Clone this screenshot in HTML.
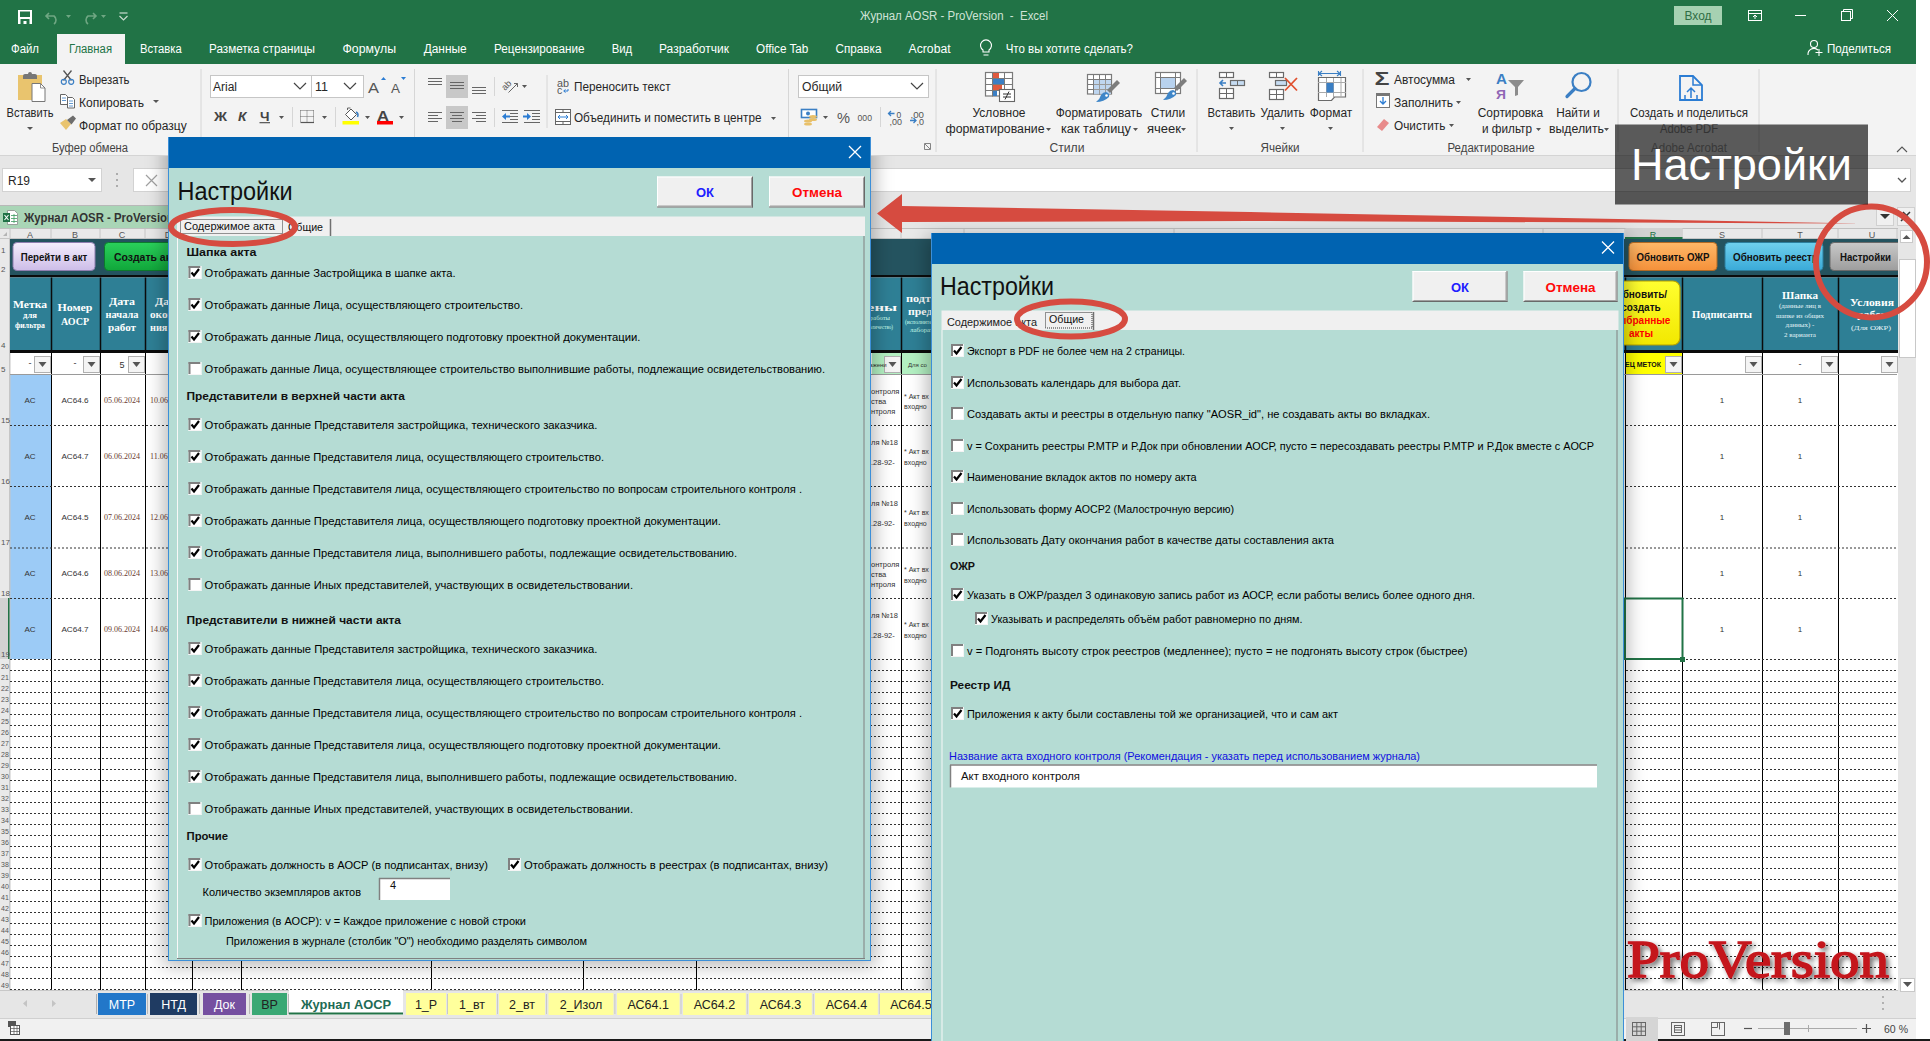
<!DOCTYPE html>
<html><head><meta charset="utf-8"><title>Excel</title>
<style>html,body{margin:0;padding:0;background:#fff;overflow:hidden}svg{display:block}text{white-space:pre}</style>
</head><body>
<svg width="1930" height="1041" viewBox="0 0 1930 1041" font-family="Liberation Sans, sans-serif">
<rect x="0" y="0" width="1930" height="1041" fill="#ffffff" />
<rect x="0" y="0" width="1916" height="64" fill="#217346" />
<rect x="18" y="10" width="14" height="14" fill="#ffffff"/><rect x="20" y="11.5" width="10" height="5.5" fill="#217346"/><rect x="20.5" y="19" width="9" height="5" fill="#217346"/><rect x="23.5" y="21" width="3" height="3" fill="#ffffff"/>
<g fill="none" stroke="#6fa783" stroke-width="1.6"><path d="M49 13 l-3 3 3 3 M46 16 h8 a5 5 0 0 1 0 8"/><path d="M93 13 l3 3 -3 3 M96 16 h-8 a5 5 0 0 0 0 8"/></g>
<g fill="#6fa783"><path d="M66 15 h5 l-2.5 3z"/><path d="M101 15 h5 l-2.5 3z"/></g>
<g fill="none" stroke="#c9dccf" stroke-width="1.2"><path d="M119.5 13 h8"/><path d="M119.5 16 l4 4 4-4"/></g>
<text x="954" y="20" font-size="12" fill="#cfe3d6" font-family="Liberation Sans" text-anchor="middle" textLength="188" lengthAdjust="spacingAndGlyphs" >Журнал AOSR - ProVersion  -  Excel</text>
<rect x="1674" y="6" width="48" height="19" fill="#a6d1b2" />
<text x="1698" y="20" font-size="12" fill="#2f6e45" font-family="Liberation Sans" text-anchor="middle" >Вход</text>
<g fill="none" stroke="#ffffff" stroke-width="1">
<rect x="1748.5" y="10.5" width="13" height="10"/><path d="M1748.5 13.5 h13 M1755 19 v-4 M1753 17 l2-2 2 2"/>
<path d="M1795 15.5 h11"/>
<rect x="1841.5" y="11.5" width="9" height="9"/><path d="M1843.5 11.5 v-2 h9 v9 h-2"/>
<path d="M1887 10 l11 11 M1898 10 l-11 11"/>
</g>
<rect x="57" y="34" width="68" height="30" fill="#f3f3f3" />
<text x="11" y="53" font-size="12.5" fill="#ffffff" font-family="Liberation Sans" textLength="28" lengthAdjust="spacingAndGlyphs" >Файл</text>
<text x="69" y="53" font-size="12.5" fill="#217346" font-family="Liberation Sans" textLength="43" lengthAdjust="spacingAndGlyphs" >Главная</text>
<text x="140" y="53" font-size="12.5" fill="#ffffff" font-family="Liberation Sans" textLength="41.7" lengthAdjust="spacingAndGlyphs" >Вставка</text>
<text x="209" y="53" font-size="12.5" fill="#ffffff" font-family="Liberation Sans" textLength="106" lengthAdjust="spacingAndGlyphs" >Разметка страницы</text>
<text x="342.5" y="53" font-size="12.5" fill="#ffffff" font-family="Liberation Sans" textLength="53.5" lengthAdjust="spacingAndGlyphs" >Формулы</text>
<text x="423.7" y="53" font-size="12.5" fill="#ffffff" font-family="Liberation Sans" textLength="43" lengthAdjust="spacingAndGlyphs" >Данные</text>
<text x="494" y="53" font-size="12.5" fill="#ffffff" font-family="Liberation Sans" textLength="90.5" lengthAdjust="spacingAndGlyphs" >Рецензирование</text>
<text x="611.7" y="53" font-size="12.5" fill="#ffffff" font-family="Liberation Sans" textLength="20.5" lengthAdjust="spacingAndGlyphs" >Вид</text>
<text x="659" y="53" font-size="12.5" fill="#ffffff" font-family="Liberation Sans" textLength="70" lengthAdjust="spacingAndGlyphs" >Разработчик</text>
<text x="756" y="53" font-size="12.5" fill="#ffffff" font-family="Liberation Sans" textLength="52.4" lengthAdjust="spacingAndGlyphs" >Office Tab</text>
<text x="835.6" y="53" font-size="12.5" fill="#ffffff" font-family="Liberation Sans" textLength="45.8" lengthAdjust="spacingAndGlyphs" >Справка</text>
<text x="908.6" y="53" font-size="12.5" fill="#ffffff" font-family="Liberation Sans" textLength="42" lengthAdjust="spacingAndGlyphs" >Acrobat</text>
<text x="1005.7" y="53" font-size="12.5" fill="#ffffff" font-family="Liberation Sans" textLength="127.3" lengthAdjust="spacingAndGlyphs" >Что вы хотите сделать?</text>
<g fill="none" stroke="#ffffff" stroke-width="1.1"><path d="M983 52 v-2 a5.5 5.5 0 1 1 6 0 v2 z M983.5 55 h5"/></g>
<g fill="none" stroke="#ffffff" stroke-width="1.1"><circle cx="1814" cy="44" r="3.5"/><path d="M1808 55 a6 6 0 0 1 10-5 M1819 49 v7 M1815.5 52.5 h7"/></g>
<text x="1827" y="53" font-size="12.5" fill="#ffffff" font-family="Liberation Sans" textLength="64" lengthAdjust="spacingAndGlyphs" >Поделиться</text>
<rect x="0" y="64" width="1916" height="92" fill="#f3f3f3" />
<rect x="0" y="155" width="1916" height="1" fill="#d4d4d4" />
<line x1="201" y1="69" x2="201" y2="152" stroke="#d6d6d6" stroke-width="1" />
<line x1="414.5" y1="69" x2="414.5" y2="152" stroke="#d6d6d6" stroke-width="1" />
<line x1="788.5" y1="69" x2="788.5" y2="152" stroke="#d6d6d6" stroke-width="1" />
<line x1="936" y1="69" x2="936" y2="152" stroke="#d6d6d6" stroke-width="1" />
<line x1="1197" y1="69" x2="1197" y2="152" stroke="#d6d6d6" stroke-width="1" />
<line x1="1363" y1="69" x2="1363" y2="152" stroke="#d6d6d6" stroke-width="1" />
<line x1="1618" y1="69" x2="1618" y2="152" stroke="#d6d6d6" stroke-width="1" />
<line x1="1759" y1="69" x2="1759" y2="152" stroke="#d6d6d6" stroke-width="1" />
<text x="90" y="152" font-size="12" fill="#444444" font-family="Liberation Sans" text-anchor="middle" textLength="76" lengthAdjust="spacingAndGlyphs" >Буфер обмена</text>
<text x="1067" y="152" font-size="12" fill="#444444" font-family="Liberation Sans" text-anchor="middle" textLength="35" lengthAdjust="spacingAndGlyphs" >Стили</text>
<text x="1280" y="152" font-size="12" fill="#444444" font-family="Liberation Sans" text-anchor="middle" textLength="39" lengthAdjust="spacingAndGlyphs" >Ячейки</text>
<text x="1491" y="152" font-size="12" fill="#444444" font-family="Liberation Sans" text-anchor="middle" textLength="87" lengthAdjust="spacingAndGlyphs" >Редактирование</text>
<text x="1689" y="152" font-size="12" fill="#9a9a9a" font-family="Liberation Sans" text-anchor="middle" textLength="76" lengthAdjust="spacingAndGlyphs" >Adobe Acrobat</text>
<rect x="18" y="75" width="24" height="25" fill="#e9c46e"/><path d="M23 79 v-3 a2 2 0 0 1 2-2 h3 a2 2 0 0 1 4 0 h3 a2 2 0 0 1 2 2 v3z" fill="#777"/><path d="M32 83.5 h8.5 l4.5 4.5 v13.5 h-13z" fill="#fff" stroke="#777" stroke-width="1"/><path d="M40.5 83.5 v4.5 h4.5" fill="none" stroke="#777" stroke-width="0.8"/>
<text x="30" y="117" font-size="12.5" fill="#262626" font-family="Liberation Sans" text-anchor="middle" textLength="47" lengthAdjust="spacingAndGlyphs" >Вставить</text>
<path d="M27 127 h6 l-3 3z" fill="#555"/>
<path d="M63.5 70.5 l8 10 M71.5 70.5 l-8 10" stroke="#555" stroke-width="1.3"/><g fill="none" stroke="#3b7fc4" stroke-width="1.2"><circle cx="63.8" cy="81.8" r="2.5"/><circle cx="71.2" cy="81.8" r="2.5"/></g>
<text x="79" y="84" font-size="12.5" fill="#262626" font-family="Liberation Sans" textLength="50.5" lengthAdjust="spacingAndGlyphs" >Вырезать</text>
<path d="M60.5 94.5 h5 l2 2 v8 h-7z" fill="#fff" stroke="#666" stroke-width="1"/><path d="M62 98 h4 M62 100.5 h4" stroke="#3b7fc4" stroke-width="0.8"/><path d="M67.5 97.5 h5 l2 2 v8.5 h-7z" fill="#fff" stroke="#666" stroke-width="1"/><path d="M69 101 h4 M69 103.5 h4 M69 106 h4" stroke="#3b7fc4" stroke-width="0.8"/>
<text x="79" y="107" font-size="12.5" fill="#262626" font-family="Liberation Sans" textLength="65" lengthAdjust="spacingAndGlyphs" >Копировать</text>
<path d="M153 100 h6 l-3 3z" fill="#555"/>
<path d="M60 123 l6-4 5 5 -5 6z" fill="#e9c46e"/><path d="M67 120 l6-4.5 3 3 -4.5 6z" fill="#6d6d6d"/>
<text x="79" y="130" font-size="12.5" fill="#262626" font-family="Liberation Sans" textLength="107.7" lengthAdjust="spacingAndGlyphs" >Формат по образцу</text>
<rect x="210.5" y="75.5" width="101" height="22" fill="#ffffff" stroke="#c6c6c6" stroke-width="1" />
<rect x="311.5" y="75.5" width="52" height="22" fill="#ffffff" stroke="#c6c6c6" stroke-width="1" />
<text x="213" y="91" font-size="12.5" fill="#262626" font-family="Liberation Sans" textLength="24" lengthAdjust="spacingAndGlyphs" >Arial</text>
<text x="315" y="91" font-size="12.5" fill="#262626" font-family="Liberation Sans" textLength="13" lengthAdjust="spacingAndGlyphs" >11</text>
<path d="M294 83 l6 6 6-6 M344 83 l6 6 6-6" fill="none" stroke="#444" stroke-width="1.2"/>
<text x="368" y="93" font-size="15" fill="#555" font-family="Liberation Sans" textLength="11" lengthAdjust="spacingAndGlyphs" >A</text>
<path d="M381 80 l2.5-3 2.5 3z" fill="#2b7cd3"/>
<text x="391" y="93" font-size="12" fill="#555" font-family="Liberation Sans" textLength="9" lengthAdjust="spacingAndGlyphs" >A</text>
<path d="M401 77 l2.5 3 2.5-3z" fill="#2b7cd3"/>
<text x="214" y="121" font-size="13" fill="#444" font-family="Liberation Sans" font-weight="bold" textLength="13" lengthAdjust="spacingAndGlyphs" >Ж</text>
<text x="238" y="121" font-size="13" fill="#444" font-family="Liberation Sans" font-weight="bold" textLength="8.5" lengthAdjust="spacingAndGlyphs" font-style="italic">К</text>
<text x="260" y="121" font-size="13" fill="#444" font-family="Liberation Sans" font-weight="bold" textLength="9.5" lengthAdjust="spacingAndGlyphs" >Ч</text>
<line x1="259.5" y1="122.7" x2="270" y2="122.7" stroke="#444" stroke-width="1.1" />
<path d="M279 116 h5 l-2.5 3z M322 116 h5 l-2.5 3z M365 116 h5 l-2.5 3z M399 116 h5 l-2.5 3z" fill="#555"/>
<line x1="292.5" y1="107" x2="292.5" y2="127" stroke="#d6d6d6" stroke-width="1" />
<line x1="335.5" y1="107" x2="335.5" y2="127" stroke="#d6d6d6" stroke-width="1" />
<g stroke="#666" stroke-width="1" stroke-dasharray="1,1" fill="none"><path d="M300.5 110.5 h13 M300.5 116.5 h13 M300.5 110.5 v11 M307 110.5 v11 M313.5 110.5 v11"/></g>
<line x1="300.5" y1="122.5" x2="314" y2="122.5" stroke="#555" stroke-width="1.2" />
<path d="M345.5 114.5 l5.5-5.5 5.5 5.5 -5.5 5.5z" fill="#fff" stroke="#555" stroke-width="1"/><path d="M356 112 q3 1.5 1.5 5" fill="none" stroke="#3b7fc4" stroke-width="1.6"/><path d="M347.5 110 v-2 h3" fill="none" stroke="#555" stroke-width="0.9"/>
<rect x="342.5" y="121" width="16.5" height="3.5" fill="#ffff00" />
<text x="377" y="121" font-size="14" fill="#444" font-family="Liberation Sans" font-weight="bold" textLength="12" lengthAdjust="spacingAndGlyphs" >A</text>
<rect x="377" y="121" width="16" height="3.5" fill="#ff0000" />
<rect x="446" y="75" width="22" height="23" fill="#c8c8c8" />
<rect x="446" y="106" width="22" height="23" fill="#c8c8c8" />
<line x1="428" y1="78.5" x2="442" y2="78.5" stroke="#666" stroke-width="1" />
<line x1="428" y1="81.5" x2="442" y2="81.5" stroke="#666" stroke-width="1" />
<line x1="428" y1="84.5" x2="442" y2="84.5" stroke="#666" stroke-width="1" />
<line x1="450" y1="82.5" x2="464" y2="82.5" stroke="#666" stroke-width="1" />
<line x1="450" y1="85.5" x2="464" y2="85.5" stroke="#666" stroke-width="1" />
<line x1="450" y1="88.5" x2="464" y2="88.5" stroke="#666" stroke-width="1" />
<line x1="472" y1="87.5" x2="486" y2="87.5" stroke="#666" stroke-width="1" />
<line x1="472" y1="90.5" x2="486" y2="90.5" stroke="#666" stroke-width="1" />
<line x1="472" y1="93.5" x2="486" y2="93.5" stroke="#666" stroke-width="1" />
<line x1="428" y1="112.5" x2="442" y2="112.5" stroke="#666" stroke-width="1" />
<line x1="450" y1="112.5" x2="464" y2="112.5" stroke="#666" stroke-width="1" />
<line x1="472" y1="112.5" x2="486" y2="112.5" stroke="#666" stroke-width="1" />
<line x1="428" y1="115.5" x2="438" y2="115.5" stroke="#666" stroke-width="1" />
<line x1="452" y1="115.5" x2="462" y2="115.5" stroke="#666" stroke-width="1" />
<line x1="476" y1="115.5" x2="486" y2="115.5" stroke="#666" stroke-width="1" />
<line x1="428" y1="118.5" x2="442" y2="118.5" stroke="#666" stroke-width="1" />
<line x1="450" y1="118.5" x2="464" y2="118.5" stroke="#666" stroke-width="1" />
<line x1="472" y1="118.5" x2="486" y2="118.5" stroke="#666" stroke-width="1" />
<line x1="428" y1="121.5" x2="438" y2="121.5" stroke="#666" stroke-width="1" />
<line x1="452" y1="121.5" x2="462" y2="121.5" stroke="#666" stroke-width="1" />
<line x1="476" y1="121.5" x2="486" y2="121.5" stroke="#666" stroke-width="1" />
<line x1="494.5" y1="77" x2="494.5" y2="96" stroke="#d6d6d6" stroke-width="1" />
<line x1="494.5" y1="108" x2="494.5" y2="127" stroke="#d6d6d6" stroke-width="1" />
<line x1="547" y1="75" x2="547" y2="128" stroke="#d6d6d6" stroke-width="1" />
<text x="0" y="0" font-size="9" fill="#555" font-family="Liberation Sans" transform="translate(505 91) rotate(-45)">ab</text>
<path d="M508.5 92.5 l9-9 M514 83.5 h3.5 v3.5" fill="none" stroke="#666" stroke-width="1"/><path d="M522 85 h5 l-2.5 3z" fill="#555"/>
<line x1="502" y1="110.5" x2="518" y2="110.5" stroke="#666" stroke-width="1" />
<line x1="524" y1="110.5" x2="540" y2="110.5" stroke="#666" stroke-width="1" />
<line x1="502" y1="122.5" x2="518" y2="122.5" stroke="#666" stroke-width="1" />
<line x1="524" y1="122.5" x2="540" y2="122.5" stroke="#666" stroke-width="1" />
<line x1="510" y1="113.5" x2="518" y2="113.5" stroke="#666" stroke-width="1" />
<line x1="532" y1="113.5" x2="540" y2="113.5" stroke="#666" stroke-width="1" />
<line x1="510" y1="116.5" x2="518" y2="116.5" stroke="#666" stroke-width="1" />
<line x1="532" y1="116.5" x2="540" y2="116.5" stroke="#666" stroke-width="1" />
<line x1="510" y1="119.5" x2="518" y2="119.5" stroke="#666" stroke-width="1" />
<line x1="532" y1="119.5" x2="540" y2="119.5" stroke="#666" stroke-width="1" />
<path d="M502 116.5 l4-3.5 v2.5 h4 v2 h-4 v2.5z M531 116.5 l-4-3.5 v2.5 h-4 v2 h4 v2.5z" fill="#2b7cd3"/>
<text x="557" y="87" font-size="10.5" fill="#555" font-family="Liberation Sans" textLength="12" lengthAdjust="spacingAndGlyphs" >ab</text>
<text x="557" y="94" font-size="10.5" fill="#555" font-family="Liberation Sans" >c</text>
<path d="M568 89 v2 h-4 M565.5 89.5 l-1.8 1.5 1.8 1.5" fill="none" stroke="#2b7cd3" stroke-width="1"/>
<rect x="555.5" y="109.5" width="15" height="15" fill="#fff" stroke="#666"/><path d="M556 112.5 h14 M556 121.5 h14 M563 109.5 v3 M563 121.5 v3" stroke="#666"/><path d="M558 117 h10 M558 117 l2-2 M558 117 l2 2 M568 117 l-2-2 M568 117 l-2 2" stroke="#2b7cd3" fill="none"/>
<text x="574" y="91" font-size="12.5" fill="#262626" font-family="Liberation Sans" textLength="96.6" lengthAdjust="spacingAndGlyphs" >Переносить текст</text>
<text x="574" y="122" font-size="12.5" fill="#262626" font-family="Liberation Sans" textLength="187.5" lengthAdjust="spacingAndGlyphs" >Объединить и поместить в центре</text>
<path d="M771 117 h5 l-2.5 3z" fill="#555"/>
<rect x="798.5" y="75.5" width="130" height="22" fill="#ffffff" stroke="#c6c6c6" stroke-width="1" />
<text x="802" y="91" font-size="12.5" fill="#262626" font-family="Liberation Sans" textLength="40" lengthAdjust="spacingAndGlyphs" >Общий</text>
<path d="M911 83 l6 6 6-6" fill="none" stroke="#444" stroke-width="1.2"/>
<rect x="801.5" y="109.5" width="15" height="8" fill="#fff" stroke="#3b7fc4" stroke-width="1.6"/><circle cx="808" cy="113.5" r="2" fill="#3b7fc4"/><ellipse cx="813" cy="116.5" rx="4" ry="1.6" fill="#e8c06a"/><ellipse cx="813" cy="119.5" rx="4" ry="1.6" fill="#e8c06a"/><ellipse cx="808" cy="121" rx="4" ry="1.6" fill="#e8c06a"/><ellipse cx="808" cy="124" rx="4" ry="1.6" fill="#e8c06a"/><path d="M823 116 h5 l-2.5 3z" fill="#555"/>
<text x="837" y="123" font-size="15" fill="#555" font-family="Liberation Sans" textLength="13" lengthAdjust="spacingAndGlyphs" >%</text>
<text x="857.5" y="120.5" font-size="9.5" fill="#555" font-family="Liberation Sans" textLength="14.5" lengthAdjust="spacingAndGlyphs" >000</text>
<line x1="880.5" y1="107" x2="880.5" y2="127" stroke="#d6d6d6" stroke-width="1" />
<text x="896.5" y="117.5" font-size="8.5" fill="#555" font-family="Liberation Sans" >0</text>
<text x="889.5" y="124.5" font-size="8.5" fill="#555" font-family="Liberation Sans" textLength="12.5" lengthAdjust="spacingAndGlyphs" >,00</text>
<path d="M888.5 113.5 h6 M891 111 l-2.5 2.5 2.5 2.5" fill="none" stroke="#3b7fc4" stroke-width="1.3"/>
<text x="910.5" y="117.5" font-size="8.5" fill="#555" font-family="Liberation Sans" textLength="13.5" lengthAdjust="spacingAndGlyphs" >,00</text>
<text x="916.5" y="124.5" font-size="8.5" fill="#555" font-family="Liberation Sans" textLength="7.5" lengthAdjust="spacingAndGlyphs" >,0</text>
<path d="M910 120.5 h6 M913.5 118 l2.5 2.5 -2.5 2.5" fill="none" stroke="#3b7fc4" stroke-width="1.3"/>
<path d="M924.5 143.5 h6 v6 h-6z M925 144 l5 5" fill="none" stroke="#777" stroke-width="0.9"/>
<rect x="985.5" y="72.5" width="27" height="23.5" fill="#fff" stroke="#7a7a7a" stroke-width="1.2"/>
<line x1="992.5" y1="72" x2="992.5" y2="96.5" stroke="#7a7a7a" stroke-width="1" />
<line x1="1004.5" y1="72" x2="1004.5" y2="96.5" stroke="#7a7a7a" stroke-width="1" />
<line x1="985" y1="78.5" x2="1013" y2="78.5" stroke="#7a7a7a" stroke-width="1" />
<line x1="985" y1="84.5" x2="1013" y2="84.5" stroke="#7a7a7a" stroke-width="1" />
<line x1="985" y1="90.5" x2="1013" y2="90.5" stroke="#7a7a7a" stroke-width="1" />
<rect x="993" y="73" width="6" height="5" fill="#e05a3e"/><rect x="993" y="79" width="11" height="5" fill="#3b7fc4"/><rect x="993" y="85" width="9" height="5" fill="#e05a3e"/><rect x="993" y="91" width="4" height="5" fill="#3b7fc4"/>
<rect x="999.5" y="89.5" width="15" height="12" fill="#fff" stroke="#666" stroke-width="1.1"/>
<path d="M1003 94 h8 M1003 97 h8 M1009 91.5 l-4 8" stroke="#333" stroke-width="1" fill="none"/>
<rect x="1087.5" y="74.5" width="24" height="19.5" fill="#fff" stroke="#7a7a7a" stroke-width="1.2"/>
<line x1="1093.5" y1="74" x2="1093.5" y2="94.5" stroke="#7a7a7a" stroke-width="1" />
<line x1="1099.5" y1="74" x2="1099.5" y2="94.5" stroke="#7a7a7a" stroke-width="1" />
<line x1="1105.5" y1="74" x2="1105.5" y2="94.5" stroke="#7a7a7a" stroke-width="1" />
<line x1="1087" y1="79.5" x2="1112" y2="79.5" stroke="#7a7a7a" stroke-width="1" />
<line x1="1087" y1="84.5" x2="1112" y2="84.5" stroke="#7a7a7a" stroke-width="1" />
<line x1="1087" y1="89.5" x2="1112" y2="89.5" stroke="#7a7a7a" stroke-width="1" />
<rect x="1094" y="80" width="17" height="14" fill="#b8d2ee" fill-opacity="0.9"/>
<line x1="1099.5" y1="80" x2="1099.5" y2="94" stroke="#9a9a9a" stroke-width="1" />
<line x1="1105.5" y1="80" x2="1105.5" y2="94" stroke="#9a9a9a" stroke-width="1" />
<line x1="1094" y1="84.5" x2="1111" y2="84.5" stroke="#9a9a9a" stroke-width="1" />
<line x1="1094" y1="89.5" x2="1111" y2="89.5" stroke="#9a9a9a" stroke-width="1" />
<path d="M1117 80 l3 3 -10 10 -3-3z" fill="#7d7d7d"/><path d="M1106 92 q4 1 3 5 q-5 5 -13 5 q4-3 5-7 q2-3 5-3z" fill="#3f86c8"/><circle cx="1106.5" cy="95.5" r="1.3" fill="#fff"/>
<rect x="1155.5" y="72.5" width="25" height="21" fill="#fff" stroke="#7a7a7a" stroke-width="1.2"/>
<line x1="1160.5" y1="72" x2="1160.5" y2="94" stroke="#7a7a7a" stroke-width="1" />
<line x1="1175.5" y1="72" x2="1175.5" y2="94" stroke="#7a7a7a" stroke-width="1" />
<line x1="1155" y1="77.5" x2="1181" y2="77.5" stroke="#7a7a7a" stroke-width="1" />
<line x1="1155" y1="88.5" x2="1181" y2="88.5" stroke="#7a7a7a" stroke-width="1" />
<rect x="1161" y="78" width="14" height="10" fill="#b8d2ee"/>
<path d="M1184 78 l3 3 -10 10 -3-3z" fill="#7d7d7d"/><path d="M1173 90 q4 1 3 5 q-5 5 -13 5 q4-3 5-7 q2-3 5-3z" fill="#3f86c8"/><circle cx="1173.5" cy="93.5" r="1.3" fill="#fff"/>
<text x="999" y="117" font-size="12.5" fill="#262626" font-family="Liberation Sans" text-anchor="middle" textLength="53" lengthAdjust="spacingAndGlyphs" >Условное</text>
<text x="995" y="133" font-size="12.5" fill="#262626" font-family="Liberation Sans" text-anchor="middle" textLength="99" lengthAdjust="spacingAndGlyphs" >форматирование</text>
<path d="M1046 128 h5 l-2.5 3z M1133 128 h5 l-2.5 3z M1181 128 h5 l-2.5 3z" fill="#555"/>
<text x="1099" y="117" font-size="12.5" fill="#262626" font-family="Liberation Sans" text-anchor="middle" textLength="86.5" lengthAdjust="spacingAndGlyphs" >Форматировать</text>
<text x="1096" y="133" font-size="12.5" fill="#262626" font-family="Liberation Sans" text-anchor="middle" textLength="70" lengthAdjust="spacingAndGlyphs" >как таблицу</text>
<text x="1168" y="117" font-size="12.5" fill="#262626" font-family="Liberation Sans" text-anchor="middle" textLength="34.5" lengthAdjust="spacingAndGlyphs" >Стили</text>
<text x="1164" y="133" font-size="12.5" fill="#262626" font-family="Liberation Sans" text-anchor="middle" textLength="34" lengthAdjust="spacingAndGlyphs" >ячеек</text>
<rect x="1219.5" y="72.5" width="14" height="5" fill="#fff" stroke="#6a6a6a" stroke-width="1.2"/>
<line x1="1226.5" y1="72" x2="1226.5" y2="78" stroke="#6a6a6a" stroke-width="1" />
<path d="M1220 83 h6 M1223 80 l-3 3 3 3" fill="none" stroke="#3b7fc4" stroke-width="1.6"/>
<rect x="1230.5" y="80.5" width="14" height="5" fill="#c6dcf2" stroke="#6a6a6a" stroke-width="1.2"/>
<line x1="1237.5" y1="80" x2="1237.5" y2="86" stroke="#6a6a6a" stroke-width="1" />
<rect x="1219.5" y="88.5" width="14" height="10" fill="#fff" stroke="#6a6a6a" stroke-width="1.2"/>
<line x1="1226.5" y1="88" x2="1226.5" y2="99" stroke="#6a6a6a" stroke-width="1" />
<line x1="1219" y1="93.5" x2="1234" y2="93.5" stroke="#6a6a6a" stroke-width="1" />
<rect x="1269.5" y="72.5" width="14" height="5" fill="#fff" stroke="#6a6a6a" stroke-width="1.2"/>
<line x1="1276.5" y1="72" x2="1276.5" y2="78" stroke="#6a6a6a" stroke-width="1" />
<rect x="1275.5" y="80.5" width="11" height="5" fill="#c6dcf2" stroke="#6a6a6a" stroke-width="1.2"/>
<rect x="1269.5" y="89.5" width="14" height="10" fill="#fff" stroke="#6a6a6a" stroke-width="1.2"/>
<line x1="1276.5" y1="89" x2="1276.5" y2="100" stroke="#6a6a6a" stroke-width="1" />
<line x1="1269" y1="94.5" x2="1284" y2="94.5" stroke="#6a6a6a" stroke-width="1" />
<path d="M1285 78 l12 12.5 M1297 78 l-12 12.5" stroke="#e0502e" stroke-width="1.8"/>
<path d="M1318.5 71 v5 M1340.5 71 v5 M1319 73.5 h21 M1322 71 l-3 2.5 3 2.5 M1337 71 l3 2.5 -3 2.5" fill="none" stroke="#3b7fc4" stroke-width="1.1"/>
<path d="M1318.5 77.5 h27 v19.5 h-11 l-3 3.5 h-13 z" fill="#fff" stroke="#6a6a6a" stroke-width="1.2"/>
<line x1="1326.5" y1="78" x2="1326.5" y2="97" stroke="#aaa" stroke-width="1" />
<line x1="1333.5" y1="78" x2="1333.5" y2="97" stroke="#aaa" stroke-width="1" />
<line x1="1341.0" y1="78" x2="1341.0" y2="97" stroke="#aaa" stroke-width="1" />
<line x1="1318" y1="82.5" x2="1346" y2="82.5" stroke="#aaa" stroke-width="1" />
<line x1="1318" y1="92.5" x2="1346" y2="92.5" stroke="#aaa" stroke-width="1" />
<rect x="1326.5" y="83" width="7" height="9.5" fill="#3b7fc4" />
<text x="1231.5" y="117" font-size="12.5" fill="#262626" font-family="Liberation Sans" text-anchor="middle" textLength="48" lengthAdjust="spacingAndGlyphs" >Вставить</text>
<text x="1282.5" y="117" font-size="12.5" fill="#262626" font-family="Liberation Sans" text-anchor="middle" textLength="44" lengthAdjust="spacingAndGlyphs" >Удалить</text>
<text x="1331" y="117" font-size="12.5" fill="#262626" font-family="Liberation Sans" text-anchor="middle" textLength="42.6" lengthAdjust="spacingAndGlyphs" >Формат</text>
<path d="M1229 127 h5 l-2.5 3z M1280 127 h5 l-2.5 3z M1328 127 h5 l-2.5 3z" fill="#555"/>
<text x="1374.5" y="85" font-size="18" fill="#444" font-family="Liberation Sans" font-weight="bold" textLength="15" lengthAdjust="spacingAndGlyphs" >Σ</text>
<text x="1394" y="84" font-size="12.5" fill="#262626" font-family="Liberation Sans" textLength="61" lengthAdjust="spacingAndGlyphs" >Автосумма</text>
<rect x="1376.5" y="93.5" width="13" height="14" fill="#fff" stroke="#777"/><rect x="1376" y="93" width="14" height="3" fill="#777"/><path d="M1383 97 v7 M1380 101 l3 3 3-3" stroke="#2b7cd3" fill="none" stroke-width="1.3"/>
<text x="1394" y="107" font-size="12.5" fill="#262626" font-family="Liberation Sans" textLength="59" lengthAdjust="spacingAndGlyphs" >Заполнить</text>
<path d="M1377 127 l7-8 5 4 -7 8z" fill="#e88b8b"/>
<text x="1394" y="130" font-size="12.5" fill="#262626" font-family="Liberation Sans" textLength="51.3" lengthAdjust="spacingAndGlyphs" >Очистить</text>
<path d="M1466 78 h5 l-2.5 3z M1456 101 h5 l-2.5 3z M1449 124 h5 l-2.5 3z" fill="#555"/>
<text x="1496" y="84" font-size="14" fill="#3b7fc4" font-family="Liberation Sans" font-weight="bold" textLength="11" lengthAdjust="spacingAndGlyphs" >A</text>
<text x="1496" y="98.5" font-size="12.5" fill="#9065b5" font-family="Liberation Sans" font-weight="bold" textLength="10" lengthAdjust="spacingAndGlyphs" >Я</text>
<path d="M1508 80 h16 l-6 7 v8 l-3 1 v-9z" fill="#8c8c8c"/>
<text x="1510.5" y="117" font-size="12.5" fill="#262626" font-family="Liberation Sans" text-anchor="middle" textLength="65.5" lengthAdjust="spacingAndGlyphs" >Сортировка</text>
<text x="1507" y="133" font-size="12.5" fill="#262626" font-family="Liberation Sans" text-anchor="middle" textLength="50" lengthAdjust="spacingAndGlyphs" >и фильтр</text>
<circle cx="1581.5" cy="82" r="9" fill="none" stroke="#3b7fc4" stroke-width="2.2"/><path d="M1575 88.5 l-8 8" stroke="#3b7fc4" stroke-width="3.2" stroke-linecap="round"/>
<text x="1578" y="117" font-size="12.5" fill="#262626" font-family="Liberation Sans" text-anchor="middle" textLength="43.5" lengthAdjust="spacingAndGlyphs" >Найти и</text>
<text x="1576.5" y="133" font-size="12.5" fill="#262626" font-family="Liberation Sans" text-anchor="middle" textLength="55" lengthAdjust="spacingAndGlyphs" >выделить</text>
<path d="M1536 128 h5 l-2.5 3z M1604 128 h5 l-2.5 3z" fill="#555"/>
<path d="M1680 76 h13 l9 9 v15 h-22z" fill="none" stroke="#2b7cd3" stroke-width="1.8"/><path d="M1693 76 v9 h9" fill="none" stroke="#2b7cd3" stroke-width="1.5"/><path d="M1691 98 v-9 M1687 92 l4-4 4 4 M1685 95 v5 h12 v-5" fill="none" stroke="#2b7cd3" stroke-width="1.5"/>
<text x="1689" y="117" font-size="12.5" fill="#262626" font-family="Liberation Sans" text-anchor="middle" textLength="118" lengthAdjust="spacingAndGlyphs" >Создать и поделиться</text>
<text x="1689" y="133" font-size="12.5" fill="#8a8a8a" font-family="Liberation Sans" text-anchor="middle" textLength="58" lengthAdjust="spacingAndGlyphs" >Adobe PDF</text>
<path d="M1897 152 l5-5 5 5" fill="none" stroke="#555" stroke-width="1.1"/>
<rect x="0" y="156" width="1916" height="73" fill="#e6e6e6" />
<rect x="2.5" y="168.5" width="99" height="23" fill="#ffffff" stroke="#d2d2d2" stroke-width="1" />
<text x="8" y="185" font-size="12.5" fill="#262626" font-family="Liberation Sans" textLength="22" lengthAdjust="spacingAndGlyphs" >R19</text>
<path d="M88 178 h8 l-4 4z" fill="#555"/>
<circle cx="117" cy="174" r="1" fill="#999"/><circle cx="117" cy="180" r="1" fill="#999"/><circle cx="117" cy="186" r="1" fill="#999"/>
<rect x="133.5" y="168.5" width="1777" height="23" fill="#ffffff" stroke="#d2d2d2" stroke-width="1" />
<path d="M146 175 l11 11 M157 175 l-11 11" stroke="#a0a0a0" stroke-width="1.2"/>
<path d="M1898 178 l4 4 4-4" fill="none" stroke="#555" stroke-width="1.3"/>
<rect x="0" y="206" width="168" height="22" fill="#a9d5b6" />
<line x1="0" y1="205.5" x2="168" y2="205.5" stroke="#b8b8b8" stroke-width="1" />
<path d="M7.5 210.5 h7 l3 3 v11 h-10z" fill="#fff" stroke="#8a8a8a" stroke-width="0.8"/><path d="M11 215.5 h6 M11 218.5 h6 M11 221.5 h6 M14 214 v9" stroke="#3c9a5f" stroke-width="0.8"/><rect x="3" y="213" width="7" height="9" fill="#1e7145"/><path d="M4.5 215 l4 5 M8.5 215 l-4 5" stroke="#fff" stroke-width="1.1"/>
<text x="24" y="222" font-size="12.5" fill="#333333" font-family="Liberation Sans" font-weight="bold" textLength="150" lengthAdjust="spacingAndGlyphs" >Журнал AOSR - ProVersion</text>
<rect x="1876.5" y="207.5" width="17" height="18" fill="#f0f0f0" stroke="#d0d0d0"/><path d="M1880 214 h10 l-5 5z" fill="#333"/>
<rect x="1897.5" y="207.5" width="17" height="18" fill="#f0f0f0" stroke="#d0d0d0"/><path d="M1901 221 l9-9 M1903 212 l5 5" stroke="#333" stroke-width="1.5"/>
<rect x="0" y="990" width="1916" height="28" fill="#e6e6e6" />
<line x1="0" y1="990.5" x2="1898" y2="990.5" stroke="#c8c8c8" stroke-width="1" />
<line x1="0" y1="1018.5" x2="1916" y2="1018.5" stroke="#d0d0d0" stroke-width="1" />
<rect x="0" y="1019" width="1916" height="20" fill="#f1f1f1" />
<rect x="0" y="1039" width="1930" height="2" fill="#1a1a1a" />
<line x1="96.5" y1="994" x2="96.5" y2="1014" stroke="#b0b0b0" stroke-width="1" />
<path d="M27 1000 l-4 3.5 4 3.5z M52 1000 l4 3.5 -4 3.5z" fill="#c4c4c4"/>
<line x1="147.5" y1="994" x2="147.5" y2="1014" stroke="#b8b8b8" stroke-width="1" />
<line x1="199.5" y1="994" x2="199.5" y2="1014" stroke="#b8b8b8" stroke-width="1" />
<line x1="249.5" y1="994" x2="249.5" y2="1014" stroke="#b8b8b8" stroke-width="1" />
<line x1="288.5" y1="994" x2="288.5" y2="1014" stroke="#b8b8b8" stroke-width="1" />
<rect x="98" y="993" width="48" height="22" fill="#2277c9" />
<text x="122.0" y="1009" font-size="12.5" fill="#ffffff" font-family="Liberation Sans" text-anchor="middle" >МТР</text>
<rect x="150" y="993" width="47" height="22" fill="#1f3b62" />
<text x="173.5" y="1009" font-size="12.5" fill="#ffffff" font-family="Liberation Sans" text-anchor="middle" >НТД</text>
<rect x="203" y="993" width="43" height="22" fill="#7550a0" />
<text x="224.5" y="1009" font-size="12.5" fill="#ffffff" font-family="Liberation Sans" text-anchor="middle" >Док</text>
<rect x="252" y="993" width="35" height="22" fill="#3aa874" />
<text x="269.5" y="1009" font-size="12.5" fill="#222222" font-family="Liberation Sans" text-anchor="middle" >ВР</text>
<rect x="289" y="989" width="114" height="26" fill="#ffffff" />
<line x1="289" y1="1013.5" x2="403" y2="1013.5" stroke="#217346" stroke-width="2" />
<text x="346" y="1009" font-size="13" fill="#1e6b55" font-family="Liberation Sans" font-weight="bold" text-anchor="middle" textLength="90" lengthAdjust="spacingAndGlyphs" >Журнал АОСР</text>
<rect x="406" y="993" width="40" height="22" fill="#ffff9c" />
<line x1="447.5" y1="994" x2="447.5" y2="1014" stroke="#c8c8c8" stroke-width="1" />
<text x="426.0" y="1009" font-size="12.5" fill="#222" font-family="Liberation Sans" text-anchor="middle" >1_Р</text>
<rect x="448" y="993" width="48" height="22" fill="#ffff9c" />
<line x1="497.5" y1="994" x2="497.5" y2="1014" stroke="#c8c8c8" stroke-width="1" />
<text x="472.0" y="1009" font-size="12.5" fill="#222" font-family="Liberation Sans" text-anchor="middle" >1_вт</text>
<rect x="499" y="993" width="46" height="22" fill="#ffff9c" />
<line x1="546.5" y1="994" x2="546.5" y2="1014" stroke="#c8c8c8" stroke-width="1" />
<text x="522.0" y="1009" font-size="12.5" fill="#222" font-family="Liberation Sans" text-anchor="middle" >2_вт</text>
<rect x="548.5" y="993" width="64.89999999999998" height="22" fill="#ffff9c" />
<line x1="614.9" y1="994" x2="614.9" y2="1014" stroke="#c8c8c8" stroke-width="1" />
<text x="580.95" y="1009" font-size="12.5" fill="#222" font-family="Liberation Sans" text-anchor="middle" >2_Изол</text>
<rect x="617" y="993" width="62.5" height="22" fill="#ffff9c" />
<line x1="681.0" y1="994" x2="681.0" y2="1014" stroke="#c8c8c8" stroke-width="1" />
<text x="648.25" y="1009" font-size="12.5" fill="#222" font-family="Liberation Sans" text-anchor="middle" >АС64.1</text>
<rect x="683" y="993" width="62.799999999999955" height="22" fill="#ffff9c" />
<line x1="747.3" y1="994" x2="747.3" y2="1014" stroke="#c8c8c8" stroke-width="1" />
<text x="714.4" y="1009" font-size="12.5" fill="#222" font-family="Liberation Sans" text-anchor="middle" >АС64.2</text>
<rect x="749" y="993" width="62.799999999999955" height="22" fill="#ffff9c" />
<line x1="813.3" y1="994" x2="813.3" y2="1014" stroke="#c8c8c8" stroke-width="1" />
<text x="780.4" y="1009" font-size="12.5" fill="#222" font-family="Liberation Sans" text-anchor="middle" >АС64.3</text>
<rect x="815" y="993" width="62.799999999999955" height="22" fill="#ffff9c" />
<line x1="879.3" y1="994" x2="879.3" y2="1014" stroke="#c8c8c8" stroke-width="1" />
<text x="846.4" y="1009" font-size="12.5" fill="#222" font-family="Liberation Sans" text-anchor="middle" >АС64.4</text>
<rect x="880" y="993" width="80" height="22" fill="#ffff9c" />
<line x1="961.5" y1="994" x2="961.5" y2="1014" stroke="#c8c8c8" stroke-width="1" />
<text x="911" y="1009" font-size="12.5" fill="#222" font-family="Liberation Sans" text-anchor="middle" >АС64.5</text>
<rect x="8" y="1021" width="8" height="6" fill="#555"/><rect x="10.5" y="1025.5" width="9" height="9" fill="#fff" stroke="#555"/><path d="M11 1028.5 h8 M11 1031.5 h8 M14 1026 v8 M17 1026 v8" stroke="#555" stroke-width=".7"/>
<rect x="1626" y="1017" width="32" height="24" fill="#d5d5d5" />
<g fill="none" stroke="#666" stroke-width="1"><rect x="1632.5" y="1022.5" width="13" height="13"/><path d="M1632.5 1026.8 h13 M1632.5 1031.2 h13 M1636.8 1022.5 v13 M1641.2 1022.5 v13"/>
<rect x="1671.5" y="1022.5" width="13" height="13"/><rect x="1674.5" y="1025.5" width="7" height="7"/><path d="M1675 1027.5 h6 M1675 1030 h6"/>
<rect x="1711.5" y="1022.5" width="13" height="13"/><path d="M1711.5 1027.5 h6 v-5 M1719.5 1022.5 v7"/></g>
<line x1="1744" y1="1028.5" x2="1752" y2="1028.5" stroke="#555" stroke-width="1.2" />
<line x1="1758" y1="1028.5" x2="1857" y2="1028.5" stroke="#aaa" stroke-width="1" />
<line x1="1808.5" y1="1025" x2="1808.5" y2="1032" stroke="#aaa" stroke-width="1" />
<rect x="1784" y="1022" width="6" height="13" fill="#6d6d6d" />
<path d="M1862 1028.5 h9 M1866.5 1024 v9" stroke="#555" stroke-width="1.2"/>
<text x="1884" y="1033" font-size="11.5" fill="#444" font-family="Liberation Sans" textLength="24" lengthAdjust="spacingAndGlyphs" >60 %</text>
<rect x="0" y="228" width="1916" height="762" fill="#ffffff" />
<rect x="0" y="228" width="1898" height="11" fill="#e9e9e9" />
<line x1="0" y1="238.5" x2="1898" y2="238.5" stroke="#c6c6c6" stroke-width="1" />
<line x1="0" y1="228.5" x2="1916" y2="228.5" stroke="#c0c0c0" stroke-width="1" />
<line x1="10" y1="229" x2="10" y2="238" stroke="#c6c6c6" stroke-width="1" />
<line x1="51" y1="229" x2="51" y2="238" stroke="#c6c6c6" stroke-width="1" />
<line x1="100" y1="229" x2="100" y2="238" stroke="#c6c6c6" stroke-width="1" />
<line x1="145" y1="229" x2="145" y2="238" stroke="#c6c6c6" stroke-width="1" />
<line x1="192" y1="229" x2="192" y2="238" stroke="#c6c6c6" stroke-width="1" />
<line x1="241" y1="229" x2="241" y2="238" stroke="#c6c6c6" stroke-width="1" />
<line x1="431" y1="229" x2="431" y2="238" stroke="#c6c6c6" stroke-width="1" />
<line x1="583" y1="229" x2="583" y2="238" stroke="#c6c6c6" stroke-width="1" />
<line x1="696" y1="229" x2="696" y2="238" stroke="#c6c6c6" stroke-width="1" />
<line x1="901" y1="229" x2="901" y2="238" stroke="#c6c6c6" stroke-width="1" />
<line x1="964" y1="229" x2="964" y2="238" stroke="#c6c6c6" stroke-width="1" />
<line x1="1174" y1="229" x2="1174" y2="238" stroke="#c6c6c6" stroke-width="1" />
<line x1="1543" y1="229" x2="1543" y2="238" stroke="#c6c6c6" stroke-width="1" />
<line x1="1625" y1="229" x2="1625" y2="238" stroke="#c6c6c6" stroke-width="1" />
<line x1="1682" y1="229" x2="1682" y2="238" stroke="#c6c6c6" stroke-width="1" />
<line x1="1762" y1="229" x2="1762" y2="238" stroke="#c6c6c6" stroke-width="1" />
<line x1="1838" y1="229" x2="1838" y2="238" stroke="#c6c6c6" stroke-width="1" />
<line x1="1897" y1="229" x2="1897" y2="238" stroke="#c6c6c6" stroke-width="1" />
<path d="M3 236 l4-4 v4z" fill="#b5b5b5"/>
<text x="30" y="237.5" font-size="9" fill="#555" font-family="Liberation Sans" text-anchor="middle" >A</text>
<text x="75" y="237.5" font-size="9" fill="#555" font-family="Liberation Sans" text-anchor="middle" >B</text>
<text x="122" y="237.5" font-size="9" fill="#555" font-family="Liberation Sans" text-anchor="middle" >C</text>
<text x="168" y="237.5" font-size="9" fill="#555" font-family="Liberation Sans" text-anchor="middle" >D</text>
<text x="1653" y="237.5" font-size="9" fill="#555" font-family="Liberation Sans" text-anchor="middle" >R</text>
<text x="1722" y="237.5" font-size="9" fill="#555" font-family="Liberation Sans" text-anchor="middle" >S</text>
<text x="1800" y="237.5" font-size="9" fill="#555" font-family="Liberation Sans" text-anchor="middle" >T</text>
<text x="1872" y="237.5" font-size="9" fill="#555" font-family="Liberation Sans" text-anchor="middle" >U</text>
<rect x="1625.5" y="228" width="57" height="10" fill="#d2d2d2" />
<line x1="1625" y1="238" x2="1682.5" y2="238" stroke="#217346" stroke-width="2" />
<text x="1653" y="237.5" font-size="9" fill="#217346" font-family="Liberation Sans" text-anchor="middle" >R</text>
<rect x="0" y="239" width="10" height="751" fill="#e9e9e9" />
<line x1="9.5" y1="239" x2="9.5" y2="990" stroke="#c6c6c6" stroke-width="1" />
<rect x="0" y="598" width="10" height="61" fill="#d2d2d2" />
<line x1="9" y1="598" x2="9" y2="659" stroke="#217346" stroke-width="2" />
<rect x="10" y="239" width="1888" height="36" fill="#24535f" />
<rect x="10" y="275" width="1888" height="2.5" fill="#0b0b0b" />
<rect x="10" y="277.5" width="1888" height="72.5" fill="#2e7f95" />
<rect x="10" y="350" width="1888" height="3" fill="#0b0b0b" />
<rect x="10" y="353" width="1888" height="21" fill="#ffffff" />
<rect x="872" y="353" width="60" height="21" fill="#b3f0c2" />
<rect x="1625" y="353" width="57" height="21" fill="#ffff00" />
<rect x="10" y="374" width="41" height="285" fill="#9ccbf6" />
<line x1="51.5" y1="277.5" x2="51.5" y2="350" stroke="#0b0b0b" stroke-width="1.5" />
<line x1="51.5" y1="353" x2="51.5" y2="990" stroke="#000" stroke-width="1" shape-rendering="crispEdges"/>
<line x1="100.5" y1="277.5" x2="100.5" y2="350" stroke="#0b0b0b" stroke-width="1.5" />
<line x1="100.5" y1="353" x2="100.5" y2="990" stroke="#000" stroke-width="1" shape-rendering="crispEdges"/>
<line x1="145.5" y1="277.5" x2="145.5" y2="350" stroke="#0b0b0b" stroke-width="1.5" />
<line x1="145.5" y1="353" x2="145.5" y2="990" stroke="#000" stroke-width="1" shape-rendering="crispEdges"/>
<line x1="192.5" y1="277.5" x2="192.5" y2="350" stroke="#0b0b0b" stroke-width="1.5" />
<line x1="192.5" y1="353" x2="192.5" y2="990" stroke="#000" stroke-width="1" shape-rendering="crispEdges"/>
<line x1="241.5" y1="277.5" x2="241.5" y2="350" stroke="#0b0b0b" stroke-width="1.5" />
<line x1="241.5" y1="353" x2="241.5" y2="990" stroke="#000" stroke-width="1" shape-rendering="crispEdges"/>
<line x1="431.5" y1="277.5" x2="431.5" y2="350" stroke="#0b0b0b" stroke-width="1.5" />
<line x1="431.5" y1="353" x2="431.5" y2="990" stroke="#000" stroke-width="1" shape-rendering="crispEdges"/>
<line x1="583.5" y1="277.5" x2="583.5" y2="350" stroke="#0b0b0b" stroke-width="1.5" />
<line x1="583.5" y1="353" x2="583.5" y2="990" stroke="#000" stroke-width="1" shape-rendering="crispEdges"/>
<line x1="696.5" y1="277.5" x2="696.5" y2="350" stroke="#0b0b0b" stroke-width="1.5" />
<line x1="696.5" y1="353" x2="696.5" y2="990" stroke="#000" stroke-width="1" shape-rendering="crispEdges"/>
<line x1="901.5" y1="277.5" x2="901.5" y2="350" stroke="#0b0b0b" stroke-width="1.5" />
<line x1="901.5" y1="353" x2="901.5" y2="990" stroke="#000" stroke-width="1" shape-rendering="crispEdges"/>
<line x1="964.5" y1="277.5" x2="964.5" y2="350" stroke="#0b0b0b" stroke-width="1.5" />
<line x1="964.5" y1="353" x2="964.5" y2="990" stroke="#000" stroke-width="1" shape-rendering="crispEdges"/>
<line x1="1174.5" y1="277.5" x2="1174.5" y2="350" stroke="#0b0b0b" stroke-width="1.5" />
<line x1="1174.5" y1="353" x2="1174.5" y2="990" stroke="#000" stroke-width="1" shape-rendering="crispEdges"/>
<line x1="1543.5" y1="277.5" x2="1543.5" y2="350" stroke="#0b0b0b" stroke-width="1.5" />
<line x1="1543.5" y1="353" x2="1543.5" y2="990" stroke="#000" stroke-width="1" shape-rendering="crispEdges"/>
<line x1="1625.5" y1="277.5" x2="1625.5" y2="350" stroke="#0b0b0b" stroke-width="1.5" />
<line x1="1625.5" y1="353" x2="1625.5" y2="990" stroke="#000" stroke-width="1" shape-rendering="crispEdges"/>
<line x1="1682.5" y1="277.5" x2="1682.5" y2="350" stroke="#0b0b0b" stroke-width="1.5" />
<line x1="1682.5" y1="353" x2="1682.5" y2="990" stroke="#000" stroke-width="1" shape-rendering="crispEdges"/>
<line x1="1762.5" y1="277.5" x2="1762.5" y2="350" stroke="#0b0b0b" stroke-width="1.5" />
<line x1="1762.5" y1="353" x2="1762.5" y2="990" stroke="#000" stroke-width="1" shape-rendering="crispEdges"/>
<line x1="1838.5" y1="277.5" x2="1838.5" y2="350" stroke="#0b0b0b" stroke-width="1.5" />
<line x1="1838.5" y1="353" x2="1838.5" y2="990" stroke="#000" stroke-width="1" shape-rendering="crispEdges"/>
<line x1="10" y1="353" x2="10" y2="990" stroke="#c6c6c6" stroke-width="1" />
<line x1="10" y1="374.5" x2="1897" y2="374.5" stroke="#333" stroke-width="1" stroke-dasharray="2,2" />
<line x1="10" y1="425.5" x2="1897" y2="425.5" stroke="#333" stroke-width="1" stroke-dasharray="2,2" />
<line x1="10" y1="486.5" x2="1897" y2="486.5" stroke="#333" stroke-width="1" stroke-dasharray="2,2" />
<line x1="10" y1="548.0" x2="1897" y2="548.0" stroke="#333" stroke-width="1" stroke-dasharray="2,2" />
<line x1="10" y1="598.5" x2="1897" y2="598.5" stroke="#333" stroke-width="1" stroke-dasharray="2,2" />
<line x1="10" y1="659.5" x2="1897" y2="659.5" stroke="#333" stroke-width="1" stroke-dasharray="2,2" />
<line x1="10" y1="670.5" x2="1897" y2="670.5" stroke="#333" stroke-width="1" stroke-dasharray="2,2" />
<line x1="10" y1="681.5" x2="1897" y2="681.5" stroke="#333" stroke-width="1" stroke-dasharray="2,2" />
<line x1="10" y1="692.5" x2="1897" y2="692.5" stroke="#333" stroke-width="1" stroke-dasharray="2,2" />
<line x1="10" y1="703.5" x2="1897" y2="703.5" stroke="#333" stroke-width="1" stroke-dasharray="2,2" />
<line x1="10" y1="714.5" x2="1897" y2="714.5" stroke="#333" stroke-width="1" stroke-dasharray="2,2" />
<line x1="10" y1="725.5" x2="1897" y2="725.5" stroke="#333" stroke-width="1" stroke-dasharray="2,2" />
<line x1="10" y1="736.5" x2="1897" y2="736.5" stroke="#333" stroke-width="1" stroke-dasharray="2,2" />
<line x1="10" y1="747.5" x2="1897" y2="747.5" stroke="#333" stroke-width="1" stroke-dasharray="2,2" />
<line x1="10" y1="758.5" x2="1897" y2="758.5" stroke="#333" stroke-width="1" stroke-dasharray="2,2" />
<line x1="10" y1="769.5" x2="1897" y2="769.5" stroke="#333" stroke-width="1" stroke-dasharray="2,2" />
<line x1="10" y1="780.5" x2="1897" y2="780.5" stroke="#333" stroke-width="1" stroke-dasharray="2,2" />
<line x1="10" y1="791.5" x2="1897" y2="791.5" stroke="#333" stroke-width="1" stroke-dasharray="2,2" />
<line x1="10" y1="802.5" x2="1897" y2="802.5" stroke="#333" stroke-width="1" stroke-dasharray="2,2" />
<line x1="10" y1="813.5" x2="1897" y2="813.5" stroke="#333" stroke-width="1" stroke-dasharray="2,2" />
<line x1="10" y1="824.5" x2="1897" y2="824.5" stroke="#333" stroke-width="1" stroke-dasharray="2,2" />
<line x1="10" y1="835.5" x2="1897" y2="835.5" stroke="#333" stroke-width="1" stroke-dasharray="2,2" />
<line x1="10" y1="846.5" x2="1897" y2="846.5" stroke="#333" stroke-width="1" stroke-dasharray="2,2" />
<line x1="10" y1="857.5" x2="1897" y2="857.5" stroke="#333" stroke-width="1" stroke-dasharray="2,2" />
<line x1="10" y1="868.5" x2="1897" y2="868.5" stroke="#333" stroke-width="1" stroke-dasharray="2,2" />
<line x1="10" y1="879.5" x2="1897" y2="879.5" stroke="#333" stroke-width="1" stroke-dasharray="2,2" />
<line x1="10" y1="890.5" x2="1897" y2="890.5" stroke="#333" stroke-width="1" stroke-dasharray="2,2" />
<line x1="10" y1="901.5" x2="1897" y2="901.5" stroke="#333" stroke-width="1" stroke-dasharray="2,2" />
<line x1="10" y1="912.5" x2="1897" y2="912.5" stroke="#333" stroke-width="1" stroke-dasharray="2,2" />
<line x1="10" y1="923.5" x2="1897" y2="923.5" stroke="#333" stroke-width="1" stroke-dasharray="2,2" />
<line x1="10" y1="934.5" x2="1897" y2="934.5" stroke="#333" stroke-width="1" stroke-dasharray="2,2" />
<line x1="10" y1="945.5" x2="1897" y2="945.5" stroke="#333" stroke-width="1" stroke-dasharray="2,2" />
<line x1="10" y1="956.5" x2="1897" y2="956.5" stroke="#333" stroke-width="1" stroke-dasharray="2,2" />
<line x1="10" y1="967.5" x2="1897" y2="967.5" stroke="#333" stroke-width="1" stroke-dasharray="2,2" />
<line x1="10" y1="978.5" x2="1897" y2="978.5" stroke="#333" stroke-width="1" stroke-dasharray="2,2" />
<line x1="10" y1="989.5" x2="1897" y2="989.5" stroke="#333" stroke-width="1" stroke-dasharray="2,2" />
<line x1="10" y1="374.5" x2="1897" y2="374.5" stroke="#9a9a9a" stroke-width="1" />
<text x="1" y="253" font-size="8" fill="#555" font-family="Liberation Sans" >1</text>
<text x="1" y="272" font-size="8" fill="#555" font-family="Liberation Sans" >2</text>
<text x="1" y="348" font-size="8" fill="#555" font-family="Liberation Sans" >4</text>
<text x="1" y="372" font-size="8" fill="#555" font-family="Liberation Sans" >5</text>
<text x="1" y="423" font-size="8" fill="#555" font-family="Liberation Sans" >15</text>
<text x="1" y="484" font-size="8" fill="#555" font-family="Liberation Sans" >16</text>
<text x="1" y="545" font-size="8" fill="#555" font-family="Liberation Sans" >17</text>
<text x="1" y="596" font-size="8" fill="#555" font-family="Liberation Sans" >18</text>
<text x="1" y="657" font-size="8" fill="#555" font-family="Liberation Sans" >19</text>
<text x="1" y="668.5" font-size="7" fill="#555" font-family="Liberation Sans" >20</text>
<text x="1" y="679.5" font-size="7" fill="#555" font-family="Liberation Sans" >21</text>
<text x="1" y="690.5" font-size="7" fill="#555" font-family="Liberation Sans" >22</text>
<text x="1" y="701.5" font-size="7" fill="#555" font-family="Liberation Sans" >23</text>
<text x="1" y="712.5" font-size="7" fill="#555" font-family="Liberation Sans" >24</text>
<text x="1" y="723.5" font-size="7" fill="#555" font-family="Liberation Sans" >25</text>
<text x="1" y="734.5" font-size="7" fill="#555" font-family="Liberation Sans" >26</text>
<text x="1" y="745.5" font-size="7" fill="#555" font-family="Liberation Sans" >27</text>
<text x="1" y="756.5" font-size="7" fill="#555" font-family="Liberation Sans" >28</text>
<text x="1" y="767.5" font-size="7" fill="#555" font-family="Liberation Sans" >29</text>
<text x="1" y="778.5" font-size="7" fill="#555" font-family="Liberation Sans" >30</text>
<text x="1" y="789.5" font-size="7" fill="#555" font-family="Liberation Sans" >31</text>
<text x="1" y="800.5" font-size="7" fill="#555" font-family="Liberation Sans" >32</text>
<text x="1" y="811.5" font-size="7" fill="#555" font-family="Liberation Sans" >33</text>
<text x="1" y="822.5" font-size="7" fill="#555" font-family="Liberation Sans" >34</text>
<text x="1" y="833.5" font-size="7" fill="#555" font-family="Liberation Sans" >35</text>
<text x="1" y="844.5" font-size="7" fill="#555" font-family="Liberation Sans" >36</text>
<text x="1" y="855.5" font-size="7" fill="#555" font-family="Liberation Sans" >37</text>
<text x="1" y="866.5" font-size="7" fill="#555" font-family="Liberation Sans" >38</text>
<text x="1" y="877.5" font-size="7" fill="#555" font-family="Liberation Sans" >39</text>
<text x="1" y="888.5" font-size="7" fill="#555" font-family="Liberation Sans" >40</text>
<text x="1" y="899.5" font-size="7" fill="#555" font-family="Liberation Sans" >41</text>
<text x="1" y="910.5" font-size="7" fill="#555" font-family="Liberation Sans" >42</text>
<text x="1" y="921.5" font-size="7" fill="#555" font-family="Liberation Sans" >43</text>
<text x="1" y="932.5" font-size="7" fill="#555" font-family="Liberation Sans" >44</text>
<text x="1" y="943.5" font-size="7" fill="#555" font-family="Liberation Sans" >45</text>
<text x="1" y="954.5" font-size="7" fill="#555" font-family="Liberation Sans" >46</text>
<text x="1" y="965.5" font-size="7" fill="#555" font-family="Liberation Sans" >47</text>
<text x="1" y="976.5" font-size="7" fill="#555" font-family="Liberation Sans" >48</text>
<text x="1" y="987.5" font-size="7" fill="#555" font-family="Liberation Sans" >49</text>
<defs><linearGradient id="lav" x1="0" y1="0" x2="0" y2="1"><stop offset="0" stop-color="#f4eefc"/><stop offset="1" stop-color="#cdbde8"/></linearGradient><linearGradient id="grn" x1="0" y1="0" x2="0" y2="1"><stop offset="0" stop-color="#2ad15b"/><stop offset="1" stop-color="#10a63a"/></linearGradient><linearGradient id="org" x1="0" y1="0" x2="0" y2="1"><stop offset="0" stop-color="#ffb868"/><stop offset="1" stop-color="#f5913a"/></linearGradient><linearGradient id="blu" x1="0" y1="0" x2="0" y2="1"><stop offset="0" stop-color="#6fd0ee"/><stop offset="1" stop-color="#3aaad8"/></linearGradient><linearGradient id="gry" x1="0" y1="0" x2="0" y2="1"><stop offset="0" stop-color="#c9c9c9"/><stop offset="1" stop-color="#9d9d9d"/></linearGradient><linearGradient id="yel" x1="0" y1="0" x2="0" y2="1"><stop offset="0" stop-color="#ffff30"/><stop offset="1" stop-color="#f2e800"/></linearGradient></defs>
<rect x="13" y="242.5" width="82" height="28" fill="url(#lav)" stroke="#8f7fb0" stroke-width="1" rx="4"/>
<text x="54" y="261" font-size="10.5" fill="#111" font-family="Liberation Sans" font-weight="bold" text-anchor="middle" textLength="66.5" lengthAdjust="spacingAndGlyphs" >Перейти в акт</text>
<rect x="104.5" y="242.5" width="80" height="28" fill="url(#grn)" stroke="#0c7a2c" stroke-width="1" rx="4"/>
<text x="114" y="261" font-size="10.5" fill="#111" font-family="Liberation Sans" font-weight="bold" textLength="62" lengthAdjust="spacingAndGlyphs" >Создать акт</text>
<rect x="1629" y="242.5" width="88" height="28" fill="url(#org)" stroke="#b26a24" stroke-width="1" rx="4"/>
<text x="1673" y="261" font-size="10.5" fill="#111" font-family="Liberation Sans" font-weight="bold" text-anchor="middle" textLength="73" lengthAdjust="spacingAndGlyphs" >Обновить ОЖР</text>
<rect x="1725" y="242.5" width="98" height="28" fill="url(#blu)" stroke="#2c7f9e" stroke-width="1" rx="4"/>
<text x="1733" y="261" font-size="10.5" fill="#111" font-family="Liberation Sans" font-weight="bold" textLength="85" lengthAdjust="spacingAndGlyphs" >Обновить реестр</text>
<rect x="1830" y="242.5" width="80" height="28" fill="url(#gry)" stroke="#6a6a6a" stroke-width="1" rx="4"/>
<text x="1840" y="261" font-size="10.5" fill="#111" font-family="Liberation Sans" font-weight="bold" textLength="51" lengthAdjust="spacingAndGlyphs" >Настройки</text>
<text x="30" y="308" font-size="10.5" fill="#ffffff" font-family="Liberation Serif" font-weight="bold" text-anchor="middle" textLength="34" lengthAdjust="spacingAndGlyphs" >Метка</text>
<text x="30" y="318" font-size="7.5" fill="#ffffff" font-family="Liberation Serif" font-weight="bold" text-anchor="middle" textLength="14" lengthAdjust="spacingAndGlyphs" >для</text>
<text x="30" y="328" font-size="7.5" fill="#ffffff" font-family="Liberation Serif" font-weight="bold" text-anchor="middle" textLength="30" lengthAdjust="spacingAndGlyphs" >фильтра</text>
<text x="75" y="311" font-size="10.5" fill="#ffffff" font-family="Liberation Serif" font-weight="bold" text-anchor="middle" textLength="35" lengthAdjust="spacingAndGlyphs" >Номер</text>
<text x="75" y="325" font-size="10.5" fill="#ffffff" font-family="Liberation Serif" font-weight="bold" text-anchor="middle" textLength="28" lengthAdjust="spacingAndGlyphs" >АОСР</text>
<text x="122" y="305" font-size="10.5" fill="#ffffff" font-family="Liberation Serif" font-weight="bold" text-anchor="middle" textLength="26" lengthAdjust="spacingAndGlyphs" >Дата</text>
<text x="122" y="318" font-size="10.5" fill="#ffffff" font-family="Liberation Serif" font-weight="bold" text-anchor="middle" textLength="33" lengthAdjust="spacingAndGlyphs" >начала</text>
<text x="122" y="331" font-size="10.5" fill="#ffffff" font-family="Liberation Serif" font-weight="bold" text-anchor="middle" textLength="28" lengthAdjust="spacingAndGlyphs" >работ</text>
<text x="168" y="305" font-size="10.5" fill="#ffffff" font-family="Liberation Serif" font-weight="bold" text-anchor="middle" textLength="26" lengthAdjust="spacingAndGlyphs" >Дата</text>
<text x="168" y="318" font-size="10.5" fill="#ffffff" font-family="Liberation Serif" font-weight="bold" text-anchor="middle" textLength="36" lengthAdjust="spacingAndGlyphs" >оконча</text>
<text x="168" y="331" font-size="10.5" fill="#ffffff" font-family="Liberation Serif" font-weight="bold" text-anchor="middle" textLength="36" lengthAdjust="spacingAndGlyphs" >ния раб</text>
<text x="882" y="311" font-size="10.5" fill="#ffffff" font-family="Liberation Serif" font-weight="bold" text-anchor="middle" textLength="30" lengthAdjust="spacingAndGlyphs" >ены</text>
<text x="880" y="320" font-size="5.5" fill="#cfe" font-family="Liberation Serif" text-anchor="middle" textLength="20" lengthAdjust="spacingAndGlyphs" >работы</text>
<text x="880" y="329" font-size="5.5" fill="#cfe" font-family="Liberation Serif" text-anchor="middle" textLength="26" lengthAdjust="spacingAndGlyphs" >количество)</text>
<text x="928" y="302" font-size="11" fill="#ffffff" font-family="Liberation Serif" font-weight="bold" text-anchor="middle" textLength="44" lengthAdjust="spacingAndGlyphs" >подтвер</text>
<text x="930" y="315" font-size="11" fill="#ffffff" font-family="Liberation Serif" font-weight="bold" text-anchor="middle" textLength="44" lengthAdjust="spacingAndGlyphs" >предъяв</text>
<text x="925" y="324" font-size="5.5" fill="#cfe" font-family="Liberation Serif" text-anchor="middle" textLength="40" lengthAdjust="spacingAndGlyphs" >(исполнительная</text>
<text x="925" y="332" font-size="5.5" fill="#cfe" font-family="Liberation Serif" text-anchor="middle" textLength="30" lengthAdjust="spacingAndGlyphs" >лаборатор</text>
<text x="1722" y="318" font-size="10.5" fill="#ffffff" font-family="Liberation Serif" font-weight="bold" text-anchor="middle" textLength="60" lengthAdjust="spacingAndGlyphs" >Подписанты</text>
<text x="1800" y="299" font-size="10.5" fill="#ffffff" font-family="Liberation Serif" font-weight="bold" text-anchor="middle" textLength="36" lengthAdjust="spacingAndGlyphs" >Шапка</text>
<text x="1800" y="308.0" font-size="7" fill="#e4f4f8" font-family="Liberation Serif" text-anchor="middle" >(данные лиц в</text>
<text x="1800" y="317.5" font-size="7" fill="#e4f4f8" font-family="Liberation Serif" text-anchor="middle" >шапке из общих</text>
<text x="1800" y="327.0" font-size="7" fill="#e4f4f8" font-family="Liberation Serif" text-anchor="middle" >данных) -</text>
<text x="1800" y="336.5" font-size="7" fill="#e4f4f8" font-family="Liberation Serif" text-anchor="middle" >2 варианта</text>
<text x="1872" y="306" font-size="10.5" fill="#ffffff" font-family="Liberation Serif" font-weight="bold" text-anchor="middle" textLength="44" lengthAdjust="spacingAndGlyphs" >Условия</text>
<text x="1872" y="318" font-size="10.5" fill="#ffffff" font-family="Liberation Serif" font-weight="bold" text-anchor="middle" textLength="30" lengthAdjust="spacingAndGlyphs" >работ</text>
<text x="1871" y="330" font-size="6.5" fill="#e4f4f8" font-family="Liberation Serif" text-anchor="middle" textLength="40" lengthAdjust="spacingAndGlyphs" >(Для ОЖР)</text>
<rect x="1590" y="281" width="90" height="64" fill="url(#yel)" stroke="#b59f00" stroke-width="1.2" rx="7"/>
<text x="1641" y="298" font-size="10" fill="#111" font-family="Liberation Sans" font-weight="bold" text-anchor="middle" >Обновить/</text>
<text x="1641" y="311" font-size="10" fill="#111" font-family="Liberation Sans" font-weight="bold" text-anchor="middle" >создать</text>
<text x="1641" y="324" font-size="10" fill="#ff0000" font-family="Liberation Sans" font-weight="bold" text-anchor="middle" >выбранные</text>
<text x="1641" y="337" font-size="10" fill="#ff0000" font-family="Liberation Sans" font-weight="bold" text-anchor="middle" >акты</text>
<rect x="34.5" y="356.5" width="16" height="16" fill="#f4f4f4" stroke="#b0b0b0" stroke-width="1" />
<path d="M38.5 362 h8 l-4 5z" fill="#555"/>
<rect x="83.5" y="356.5" width="16" height="16" fill="#f4f4f4" stroke="#b0b0b0" stroke-width="1" />
<path d="M87.5 362 h8 l-4 5z" fill="#555"/>
<rect x="128.5" y="356.5" width="16" height="16" fill="#f4f4f4" stroke="#b0b0b0" stroke-width="1" />
<path d="M132.5 362 h8 l-4 5z" fill="#555"/>
<rect x="175.5" y="356.5" width="16" height="16" fill="#f4f4f4" stroke="#b0b0b0" stroke-width="1" />
<path d="M179.5 362 h8 l-4 5z" fill="#555"/>
<rect x="884.5" y="356.5" width="16" height="16" fill="#f4f4f4" stroke="#b0b0b0" stroke-width="1" />
<path d="M888.5 362 h8 l-4 5z" fill="#555"/>
<rect x="1665.5" y="356.5" width="16" height="16" fill="#f4f4f4" stroke="#b0b0b0" stroke-width="1" />
<path d="M1669.5 362 h8 l-4 5z" fill="#555"/>
<rect x="1745.5" y="356.5" width="16" height="16" fill="#f4f4f4" stroke="#b0b0b0" stroke-width="1" />
<path d="M1749.5 362 h8 l-4 5z" fill="#555"/>
<rect x="1821.5" y="356.5" width="16" height="16" fill="#f4f4f4" stroke="#b0b0b0" stroke-width="1" />
<path d="M1825.5 362 h8 l-4 5z" fill="#555"/>
<rect x="1881.5" y="356.5" width="16" height="16" fill="#f4f4f4" stroke="#b0b0b0" stroke-width="1" />
<path d="M1885.5 362 h8 l-4 5z" fill="#555"/>
<text x="30" y="366" font-size="9" fill="#333" font-family="Liberation Sans" text-anchor="middle" >-</text>
<text x="75" y="366" font-size="9" fill="#333" font-family="Liberation Sans" text-anchor="middle" >-</text>
<text x="122" y="368" font-size="9" fill="#333" font-family="Liberation Sans" text-anchor="middle" >5</text>
<text x="1643" y="367" font-size="7" fill="#111" font-family="Liberation Sans" font-weight="bold" text-anchor="middle" textLength="36" lengthAdjust="spacingAndGlyphs" >ЕЦ МЕТОК</text>
<text x="1800" y="367" font-size="9" fill="#333" font-family="Liberation Sans" text-anchor="middle" >-</text>
<text x="866" y="367" font-size="6" fill="#333" font-family="Liberation Sans" >ражени</text>
<text x="908" y="367" font-size="6" fill="#333" font-family="Liberation Sans" >Для со</text>
<text x="30" y="402.5" font-size="8" fill="#333" font-family="Liberation Sans" text-anchor="middle" >АС</text>
<text x="75" y="402.5" font-size="8" fill="#333" font-family="Liberation Sans" text-anchor="middle" textLength="27" lengthAdjust="spacingAndGlyphs" >АС64.6</text>
<text x="122" y="402.5" font-size="7.5" fill="#6a3a30" font-family="Liberation Serif" text-anchor="middle" textLength="36" lengthAdjust="spacingAndGlyphs" >05.06.2024</text>
<text x="150" y="402.5" font-size="7.5" fill="#6a3a30" font-family="Liberation Serif" textLength="36" lengthAdjust="spacingAndGlyphs" >10.06.2024</text>
<text x="1722" y="402.5" font-size="8" fill="#333" font-family="Liberation Sans" text-anchor="middle" >1</text>
<text x="1800" y="402.5" font-size="8" fill="#333" font-family="Liberation Sans" text-anchor="middle" >1</text>
<text x="871" y="393.5" font-size="7.5" fill="#333" font-family="Liberation Sans" >онтроля</text>
<text x="871" y="403.5" font-size="7.5" fill="#333" font-family="Liberation Sans" >ства</text>
<text x="871" y="413.5" font-size="7.5" fill="#333" font-family="Liberation Sans" >нтроля</text>
<text x="904" y="398.5" font-size="7" fill="#333" font-family="Liberation Sans" >* Акт вх</text>
<text x="904" y="409" font-size="7" fill="#333" font-family="Liberation Sans" >входно</text>
<text x="30" y="458.5" font-size="8" fill="#333" font-family="Liberation Sans" text-anchor="middle" >АС</text>
<text x="75" y="458.5" font-size="8" fill="#333" font-family="Liberation Sans" text-anchor="middle" textLength="27" lengthAdjust="spacingAndGlyphs" >АС64.7</text>
<text x="122" y="458.5" font-size="7.5" fill="#6a3a30" font-family="Liberation Serif" text-anchor="middle" textLength="36" lengthAdjust="spacingAndGlyphs" >06.06.2024</text>
<text x="150" y="458.5" font-size="7.5" fill="#6a3a30" font-family="Liberation Serif" textLength="36" lengthAdjust="spacingAndGlyphs" >11.06.2024</text>
<text x="1722" y="458.5" font-size="8" fill="#333" font-family="Liberation Sans" text-anchor="middle" >1</text>
<text x="1800" y="458.5" font-size="8" fill="#333" font-family="Liberation Sans" text-anchor="middle" >1</text>
<text x="871" y="444.5" font-size="7.5" fill="#333" font-family="Liberation Sans" >ля №18</text>
<text x="871" y="464.5" font-size="7.5" fill="#333" font-family="Liberation Sans" >.28-92-</text>
<text x="904" y="454" font-size="7" fill="#333" font-family="Liberation Sans" >* Акт вх</text>
<text x="904" y="465" font-size="7" fill="#333" font-family="Liberation Sans" >входно</text>
<text x="30" y="519.75" font-size="8" fill="#333" font-family="Liberation Sans" text-anchor="middle" >АС</text>
<text x="75" y="519.75" font-size="8" fill="#333" font-family="Liberation Sans" text-anchor="middle" textLength="27" lengthAdjust="spacingAndGlyphs" >АС64.5</text>
<text x="122" y="519.75" font-size="7.5" fill="#6a3a30" font-family="Liberation Serif" text-anchor="middle" textLength="36" lengthAdjust="spacingAndGlyphs" >07.06.2024</text>
<text x="150" y="519.75" font-size="7.5" fill="#6a3a30" font-family="Liberation Serif" textLength="36" lengthAdjust="spacingAndGlyphs" >12.06.2024</text>
<text x="1722" y="519.75" font-size="8" fill="#333" font-family="Liberation Sans" text-anchor="middle" >1</text>
<text x="1800" y="519.75" font-size="8" fill="#333" font-family="Liberation Sans" text-anchor="middle" >1</text>
<text x="871" y="505.5" font-size="7.5" fill="#333" font-family="Liberation Sans" >ля №18</text>
<text x="871" y="525.5" font-size="7.5" fill="#333" font-family="Liberation Sans" >.28-92-</text>
<text x="904" y="515" font-size="7" fill="#333" font-family="Liberation Sans" >* Акт вх</text>
<text x="904" y="526" font-size="7" fill="#333" font-family="Liberation Sans" >входно</text>
<text x="30" y="575.75" font-size="8" fill="#333" font-family="Liberation Sans" text-anchor="middle" >АС</text>
<text x="75" y="575.75" font-size="8" fill="#333" font-family="Liberation Sans" text-anchor="middle" textLength="27" lengthAdjust="spacingAndGlyphs" >АС64.6</text>
<text x="122" y="575.75" font-size="7.5" fill="#6a3a30" font-family="Liberation Serif" text-anchor="middle" textLength="36" lengthAdjust="spacingAndGlyphs" >08.06.2024</text>
<text x="150" y="575.75" font-size="7.5" fill="#6a3a30" font-family="Liberation Serif" textLength="36" lengthAdjust="spacingAndGlyphs" >13.06.2024</text>
<text x="1722" y="575.75" font-size="8" fill="#333" font-family="Liberation Sans" text-anchor="middle" >1</text>
<text x="1800" y="575.75" font-size="8" fill="#333" font-family="Liberation Sans" text-anchor="middle" >1</text>
<text x="871" y="567.0" font-size="7.5" fill="#333" font-family="Liberation Sans" >онтроля</text>
<text x="871" y="577.0" font-size="7.5" fill="#333" font-family="Liberation Sans" >ства</text>
<text x="871" y="587.0" font-size="7.5" fill="#333" font-family="Liberation Sans" >нтроля</text>
<text x="904" y="572.0" font-size="7" fill="#333" font-family="Liberation Sans" >* Акт вх</text>
<text x="904" y="582.5" font-size="7" fill="#333" font-family="Liberation Sans" >входно</text>
<text x="30" y="631.5" font-size="8" fill="#333" font-family="Liberation Sans" text-anchor="middle" >АС</text>
<text x="75" y="631.5" font-size="8" fill="#333" font-family="Liberation Sans" text-anchor="middle" textLength="27" lengthAdjust="spacingAndGlyphs" >АС64.7</text>
<text x="122" y="631.5" font-size="7.5" fill="#6a3a30" font-family="Liberation Serif" text-anchor="middle" textLength="36" lengthAdjust="spacingAndGlyphs" >09.06.2024</text>
<text x="150" y="631.5" font-size="7.5" fill="#6a3a30" font-family="Liberation Serif" textLength="36" lengthAdjust="spacingAndGlyphs" >14.06.2024</text>
<text x="1722" y="631.5" font-size="8" fill="#333" font-family="Liberation Sans" text-anchor="middle" >1</text>
<text x="1800" y="631.5" font-size="8" fill="#333" font-family="Liberation Sans" text-anchor="middle" >1</text>
<text x="871" y="617.5" font-size="7.5" fill="#333" font-family="Liberation Sans" >ля №18</text>
<text x="871" y="637.5" font-size="7.5" fill="#333" font-family="Liberation Sans" >.28-92-</text>
<text x="904" y="627" font-size="7" fill="#333" font-family="Liberation Sans" >* Акт вх</text>
<text x="904" y="638" font-size="7" fill="#333" font-family="Liberation Sans" >входно</text>
<rect x="1625" y="598.5" width="57.5" height="60.5" fill="none" stroke="#217346" stroke-width="2" />
<rect x="1680" y="657" width="5" height="5" fill="#217346" />
<rect x="1898" y="228" width="18" height="762" fill="#e6e6e6" />
<rect x="1900.5" y="230.5" width="12" height="12" fill="#ffffff" stroke="#c8c8c8" stroke-width="1" />
<path d="M1902.5 239 h8 l-4-4z" fill="#555"/>
<rect x="1899.5" y="259.5" width="16" height="98" fill="#ffffff" stroke="#c8c8c8" stroke-width="1" />
<rect x="1900.5" y="978.5" width="14" height="13" fill="#ffffff" stroke="#c8c8c8" stroke-width="1" />
<path d="M1903 982 h9 l-4.5 5z" fill="#555"/>
<circle cx="1883" cy="997" r=".9" fill="#999"/><circle cx="1883" cy="1003" r=".9" fill="#999"/><circle cx="1883" cy="1009" r=".9" fill="#999"/>
<defs><filter id="blur10" x="-20%" y="-20%" width="140%" height="140%"><feGaussianBlur stdDeviation="9"/></filter></defs>
<g clip-path="url(#sheetclip)">
<rect x="164" y="140" width="711" height="826" fill="#000" fill-opacity="0.28" filter="url(#blur10)"/>
<rect x="927" y="236" width="701" height="820" fill="#000" fill-opacity="0.28" filter="url(#blur10)"/>
</g>
<defs><clipPath id="sheetclip"><rect x="0" y="156" width="1916" height="834"/></clipPath></defs>
<rect x="168" y="137" width="703" height="824" fill="#b5dcd4" />
<rect x="168" y="137" width="703" height="31" fill="#0063b1" />
<line x1="168.5" y1="137" x2="168.5" y2="961" stroke="#3c8fd8" stroke-width="1" />
<line x1="870.5" y1="137" x2="870.5" y2="961" stroke="#3c8fd8" stroke-width="1" />
<line x1="168" y1="960.5" x2="871" y2="960.5" stroke="#3c8fd8" stroke-width="1" />
<path d="M849 146 l12 12 M861 146 l-12 12" stroke="#fff" stroke-width="1.3"/>
<text x="177.5" y="200" font-size="25" fill="#111" font-family="Liberation Sans" textLength="115" lengthAdjust="spacingAndGlyphs" >Настройки</text>
<rect x="657" y="176.5" width="96" height="31.0" fill="#f0f0f0" />
<line x1="657" y1="177.0" x2="753" y2="177.0" stroke="#ffffff" stroke-width="1" />
<line x1="657.5" y1="176.5" x2="657.5" y2="207.5" stroke="#ffffff" stroke-width="1" />
<line x1="657" y1="207.0" x2="753" y2="207.0" stroke="#696969" stroke-width="1" />
<line x1="752.5" y1="176.5" x2="752.5" y2="207.5" stroke="#696969" stroke-width="1" />
<line x1="658" y1="206.0" x2="752" y2="206.0" stroke="#a0a0a0" stroke-width="1" />
<line x1="751.5" y1="177.5" x2="751.5" y2="206.5" stroke="#a0a0a0" stroke-width="1" />
<text x="705.0" y="197.0" font-size="13" fill="#2020ff" font-family="Liberation Sans" font-weight="bold" text-anchor="middle" textLength="18" lengthAdjust="spacingAndGlyphs" >ОК</text>
<rect x="769" y="176.5" width="96" height="31.0" fill="#f0f0f0" />
<line x1="769" y1="177.0" x2="865" y2="177.0" stroke="#ffffff" stroke-width="1" />
<line x1="769.5" y1="176.5" x2="769.5" y2="207.5" stroke="#ffffff" stroke-width="1" />
<line x1="769" y1="207.0" x2="865" y2="207.0" stroke="#696969" stroke-width="1" />
<line x1="864.5" y1="176.5" x2="864.5" y2="207.5" stroke="#696969" stroke-width="1" />
<line x1="770" y1="206.0" x2="864" y2="206.0" stroke="#a0a0a0" stroke-width="1" />
<line x1="863.5" y1="177.5" x2="863.5" y2="206.5" stroke="#a0a0a0" stroke-width="1" />
<text x="817.0" y="197.0" font-size="13" fill="#ff0a0a" font-family="Liberation Sans" font-weight="bold" text-anchor="middle" textLength="50" lengthAdjust="spacingAndGlyphs" >Отмена</text>
<rect x="177" y="216.5" width="688" height="19.5" fill="#f0f0f0" />
<line x1="177.5" y1="236" x2="177.5" y2="959" stroke="#f8f8f8" stroke-width="1" />
<line x1="864" y1="236" x2="864" y2="959" stroke="#808080" stroke-width="1" />
<line x1="177" y1="958.5" x2="865" y2="958.5" stroke="#808080" stroke-width="1" />
<rect x="180" y="219" width="103" height="15" fill="#f0f0f0" />
<rect x="180.5" y="219.5" width="102" height="14" fill="none" stroke="#333" stroke-width="1" stroke-dasharray="1,1"/>
<text x="184" y="229.5" font-size="11" fill="#111" font-family="Liberation Sans" textLength="91" lengthAdjust="spacingAndGlyphs" >Содержимое акта</text>
<line x1="330.5" y1="219" x2="330.5" y2="236" stroke="#707070" stroke-width="1.5" />
<text x="288" y="231" font-size="11" fill="#111" font-family="Liberation Sans" textLength="35" lengthAdjust="spacingAndGlyphs" >Общие</text>
<text x="186.5" y="256" font-size="11" fill="#111" font-family="Liberation Sans" font-weight="bold" textLength="70" lengthAdjust="spacingAndGlyphs" >Шапка акта</text>
<rect x="188.5" y="266" width="13" height="13" fill="#ffffff" />
<line x1="188.5" y1="267" x2="200.5" y2="267" stroke="#808080" stroke-width="2" />
<line x1="189.5" y1="266" x2="189.5" y2="278" stroke="#808080" stroke-width="2" />
<line x1="188.5" y1="278.5" x2="201.5" y2="278.5" stroke="#f4f4f4" stroke-width="1" />
<line x1="201.0" y1="266" x2="201.0" y2="279" stroke="#f4f4f4" stroke-width="1" />
<path d="M191.5 272.5 l2.5 3 l5-6.5" fill="none" stroke="#000" stroke-width="2.2"/>
<text x="204.5" y="277" font-size="11" fill="#000" font-family="Liberation Sans" textLength="251" lengthAdjust="spacingAndGlyphs" >Отображать данные Застройщика в шапке акта.</text>
<rect x="188.5" y="298" width="13" height="13" fill="#ffffff" />
<line x1="188.5" y1="299" x2="200.5" y2="299" stroke="#808080" stroke-width="2" />
<line x1="189.5" y1="298" x2="189.5" y2="310" stroke="#808080" stroke-width="2" />
<line x1="188.5" y1="310.5" x2="201.5" y2="310.5" stroke="#f4f4f4" stroke-width="1" />
<line x1="201.0" y1="298" x2="201.0" y2="311" stroke="#f4f4f4" stroke-width="1" />
<path d="M191.5 304.5 l2.5 3 l5-6.5" fill="none" stroke="#000" stroke-width="2.2"/>
<text x="204.5" y="309" font-size="11" fill="#000" font-family="Liberation Sans" textLength="318.5" lengthAdjust="spacingAndGlyphs" >Отображать данные Лица, осуществляющего строительство.</text>
<rect x="188.5" y="330" width="13" height="13" fill="#ffffff" />
<line x1="188.5" y1="331" x2="200.5" y2="331" stroke="#808080" stroke-width="2" />
<line x1="189.5" y1="330" x2="189.5" y2="342" stroke="#808080" stroke-width="2" />
<line x1="188.5" y1="342.5" x2="201.5" y2="342.5" stroke="#f4f4f4" stroke-width="1" />
<line x1="201.0" y1="330" x2="201.0" y2="343" stroke="#f4f4f4" stroke-width="1" />
<path d="M191.5 336.5 l2.5 3 l5-6.5" fill="none" stroke="#000" stroke-width="2.2"/>
<text x="204.5" y="341" font-size="11" fill="#000" font-family="Liberation Sans" textLength="436" lengthAdjust="spacingAndGlyphs" >Отображать данные Лица, осуществляющего подготовку проектной документации.</text>
<rect x="188.5" y="362" width="13" height="13" fill="#ffffff" />
<line x1="188.5" y1="363" x2="200.5" y2="363" stroke="#808080" stroke-width="2" />
<line x1="189.5" y1="362" x2="189.5" y2="374" stroke="#808080" stroke-width="2" />
<line x1="188.5" y1="374.5" x2="201.5" y2="374.5" stroke="#f4f4f4" stroke-width="1" />
<line x1="201.0" y1="362" x2="201.0" y2="375" stroke="#f4f4f4" stroke-width="1" />
<text x="204.5" y="373" font-size="11" fill="#000" font-family="Liberation Sans" textLength="620.5" lengthAdjust="spacingAndGlyphs" >Отображать данные Лица, осуществляющее строительство выполнившие работы, подлежащие освидетельствованию.</text>
<text x="186.5" y="400" font-size="11" fill="#111" font-family="Liberation Sans" font-weight="bold" textLength="218.5" lengthAdjust="spacingAndGlyphs" >Представители в верхней части акта</text>
<rect x="188.5" y="418" width="13" height="13" fill="#ffffff" />
<line x1="188.5" y1="419" x2="200.5" y2="419" stroke="#808080" stroke-width="2" />
<line x1="189.5" y1="418" x2="189.5" y2="430" stroke="#808080" stroke-width="2" />
<line x1="188.5" y1="430.5" x2="201.5" y2="430.5" stroke="#f4f4f4" stroke-width="1" />
<line x1="201.0" y1="418" x2="201.0" y2="431" stroke="#f4f4f4" stroke-width="1" />
<path d="M191.5 424.5 l2.5 3 l5-6.5" fill="none" stroke="#000" stroke-width="2.2"/>
<text x="204.5" y="429" font-size="11" fill="#000" font-family="Liberation Sans" textLength="393" lengthAdjust="spacingAndGlyphs" >Отображать данные Представителя застройщика, технического заказчика.</text>
<rect x="188.5" y="450" width="13" height="13" fill="#ffffff" />
<line x1="188.5" y1="451" x2="200.5" y2="451" stroke="#808080" stroke-width="2" />
<line x1="189.5" y1="450" x2="189.5" y2="462" stroke="#808080" stroke-width="2" />
<line x1="188.5" y1="462.5" x2="201.5" y2="462.5" stroke="#f4f4f4" stroke-width="1" />
<line x1="201.0" y1="450" x2="201.0" y2="463" stroke="#f4f4f4" stroke-width="1" />
<path d="M191.5 456.5 l2.5 3 l5-6.5" fill="none" stroke="#000" stroke-width="2.2"/>
<text x="204.5" y="461" font-size="11" fill="#000" font-family="Liberation Sans" textLength="399.5" lengthAdjust="spacingAndGlyphs" >Отображать данные Представителя лица, осуществляющего строительство.</text>
<rect x="188.5" y="482" width="13" height="13" fill="#ffffff" />
<line x1="188.5" y1="483" x2="200.5" y2="483" stroke="#808080" stroke-width="2" />
<line x1="189.5" y1="482" x2="189.5" y2="494" stroke="#808080" stroke-width="2" />
<line x1="188.5" y1="494.5" x2="201.5" y2="494.5" stroke="#f4f4f4" stroke-width="1" />
<line x1="201.0" y1="482" x2="201.0" y2="495" stroke="#f4f4f4" stroke-width="1" />
<path d="M191.5 488.5 l2.5 3 l5-6.5" fill="none" stroke="#000" stroke-width="2.2"/>
<text x="204.5" y="493" font-size="11" fill="#000" font-family="Liberation Sans" textLength="597.5" lengthAdjust="spacingAndGlyphs" >Отображать данные Представителя лица, осуществляющего строительство по вопросам строительного контроля .</text>
<rect x="188.5" y="514" width="13" height="13" fill="#ffffff" />
<line x1="188.5" y1="515" x2="200.5" y2="515" stroke="#808080" stroke-width="2" />
<line x1="189.5" y1="514" x2="189.5" y2="526" stroke="#808080" stroke-width="2" />
<line x1="188.5" y1="526.5" x2="201.5" y2="526.5" stroke="#f4f4f4" stroke-width="1" />
<line x1="201.0" y1="514" x2="201.0" y2="527" stroke="#f4f4f4" stroke-width="1" />
<path d="M191.5 520.5 l2.5 3 l5-6.5" fill="none" stroke="#000" stroke-width="2.2"/>
<text x="204.5" y="525" font-size="11" fill="#000" font-family="Liberation Sans" textLength="516.5" lengthAdjust="spacingAndGlyphs" >Отображать данные Представителя лица, осуществляющего подготовку проектной документации.</text>
<rect x="188.5" y="546" width="13" height="13" fill="#ffffff" />
<line x1="188.5" y1="547" x2="200.5" y2="547" stroke="#808080" stroke-width="2" />
<line x1="189.5" y1="546" x2="189.5" y2="558" stroke="#808080" stroke-width="2" />
<line x1="188.5" y1="558.5" x2="201.5" y2="558.5" stroke="#f4f4f4" stroke-width="1" />
<line x1="201.0" y1="546" x2="201.0" y2="559" stroke="#f4f4f4" stroke-width="1" />
<path d="M191.5 552.5 l2.5 3 l5-6.5" fill="none" stroke="#000" stroke-width="2.2"/>
<text x="204.5" y="557" font-size="11" fill="#000" font-family="Liberation Sans" textLength="532.5" lengthAdjust="spacingAndGlyphs" >Отображать данные Представителя лица, выполнившего работы, подлежащие освидетельствованию.</text>
<rect x="188.5" y="578" width="13" height="13" fill="#ffffff" />
<line x1="188.5" y1="579" x2="200.5" y2="579" stroke="#808080" stroke-width="2" />
<line x1="189.5" y1="578" x2="189.5" y2="590" stroke="#808080" stroke-width="2" />
<line x1="188.5" y1="590.5" x2="201.5" y2="590.5" stroke="#f4f4f4" stroke-width="1" />
<line x1="201.0" y1="578" x2="201.0" y2="591" stroke="#f4f4f4" stroke-width="1" />
<text x="204.5" y="589" font-size="11" fill="#000" font-family="Liberation Sans" textLength="428.5" lengthAdjust="spacingAndGlyphs" >Отображать данные Иных представителей, участвующих в освидетельствовании.</text>
<text x="186.5" y="624" font-size="11" fill="#111" font-family="Liberation Sans" font-weight="bold" textLength="214.5" lengthAdjust="spacingAndGlyphs" >Представители в нижней части акта</text>
<rect x="188.5" y="642" width="13" height="13" fill="#ffffff" />
<line x1="188.5" y1="643" x2="200.5" y2="643" stroke="#808080" stroke-width="2" />
<line x1="189.5" y1="642" x2="189.5" y2="654" stroke="#808080" stroke-width="2" />
<line x1="188.5" y1="654.5" x2="201.5" y2="654.5" stroke="#f4f4f4" stroke-width="1" />
<line x1="201.0" y1="642" x2="201.0" y2="655" stroke="#f4f4f4" stroke-width="1" />
<path d="M191.5 648.5 l2.5 3 l5-6.5" fill="none" stroke="#000" stroke-width="2.2"/>
<text x="204.5" y="653" font-size="11" fill="#000" font-family="Liberation Sans" textLength="393" lengthAdjust="spacingAndGlyphs" >Отображать данные Представителя застройщика, технического заказчика.</text>
<rect x="188.5" y="674" width="13" height="13" fill="#ffffff" />
<line x1="188.5" y1="675" x2="200.5" y2="675" stroke="#808080" stroke-width="2" />
<line x1="189.5" y1="674" x2="189.5" y2="686" stroke="#808080" stroke-width="2" />
<line x1="188.5" y1="686.5" x2="201.5" y2="686.5" stroke="#f4f4f4" stroke-width="1" />
<line x1="201.0" y1="674" x2="201.0" y2="687" stroke="#f4f4f4" stroke-width="1" />
<path d="M191.5 680.5 l2.5 3 l5-6.5" fill="none" stroke="#000" stroke-width="2.2"/>
<text x="204.5" y="685" font-size="11" fill="#000" font-family="Liberation Sans" textLength="399.5" lengthAdjust="spacingAndGlyphs" >Отображать данные Представителя лица, осуществляющего строительство.</text>
<rect x="188.5" y="706" width="13" height="13" fill="#ffffff" />
<line x1="188.5" y1="707" x2="200.5" y2="707" stroke="#808080" stroke-width="2" />
<line x1="189.5" y1="706" x2="189.5" y2="718" stroke="#808080" stroke-width="2" />
<line x1="188.5" y1="718.5" x2="201.5" y2="718.5" stroke="#f4f4f4" stroke-width="1" />
<line x1="201.0" y1="706" x2="201.0" y2="719" stroke="#f4f4f4" stroke-width="1" />
<path d="M191.5 712.5 l2.5 3 l5-6.5" fill="none" stroke="#000" stroke-width="2.2"/>
<text x="204.5" y="717" font-size="11" fill="#000" font-family="Liberation Sans" textLength="597.5" lengthAdjust="spacingAndGlyphs" >Отображать данные Представителя лица, осуществляющего строительство по вопросам строительного контроля .</text>
<rect x="188.5" y="738" width="13" height="13" fill="#ffffff" />
<line x1="188.5" y1="739" x2="200.5" y2="739" stroke="#808080" stroke-width="2" />
<line x1="189.5" y1="738" x2="189.5" y2="750" stroke="#808080" stroke-width="2" />
<line x1="188.5" y1="750.5" x2="201.5" y2="750.5" stroke="#f4f4f4" stroke-width="1" />
<line x1="201.0" y1="738" x2="201.0" y2="751" stroke="#f4f4f4" stroke-width="1" />
<path d="M191.5 744.5 l2.5 3 l5-6.5" fill="none" stroke="#000" stroke-width="2.2"/>
<text x="204.5" y="749" font-size="11" fill="#000" font-family="Liberation Sans" textLength="516.5" lengthAdjust="spacingAndGlyphs" >Отображать данные Представителя лица, осуществляющего подготовку проектной документации.</text>
<rect x="188.5" y="770" width="13" height="13" fill="#ffffff" />
<line x1="188.5" y1="771" x2="200.5" y2="771" stroke="#808080" stroke-width="2" />
<line x1="189.5" y1="770" x2="189.5" y2="782" stroke="#808080" stroke-width="2" />
<line x1="188.5" y1="782.5" x2="201.5" y2="782.5" stroke="#f4f4f4" stroke-width="1" />
<line x1="201.0" y1="770" x2="201.0" y2="783" stroke="#f4f4f4" stroke-width="1" />
<path d="M191.5 776.5 l2.5 3 l5-6.5" fill="none" stroke="#000" stroke-width="2.2"/>
<text x="204.5" y="781" font-size="11" fill="#000" font-family="Liberation Sans" textLength="532.5" lengthAdjust="spacingAndGlyphs" >Отображать данные Представителя лица, выполнившего работы, подлежащие освидетельствованию.</text>
<rect x="188.5" y="802" width="13" height="13" fill="#ffffff" />
<line x1="188.5" y1="803" x2="200.5" y2="803" stroke="#808080" stroke-width="2" />
<line x1="189.5" y1="802" x2="189.5" y2="814" stroke="#808080" stroke-width="2" />
<line x1="188.5" y1="814.5" x2="201.5" y2="814.5" stroke="#f4f4f4" stroke-width="1" />
<line x1="201.0" y1="802" x2="201.0" y2="815" stroke="#f4f4f4" stroke-width="1" />
<text x="204.5" y="813" font-size="11" fill="#000" font-family="Liberation Sans" textLength="428.5" lengthAdjust="spacingAndGlyphs" >Отображать данные Иных представителей, участвующих в освидетельствовании.</text>
<text x="186.5" y="840" font-size="11" fill="#111" font-family="Liberation Sans" font-weight="bold" textLength="41.5" lengthAdjust="spacingAndGlyphs" >Прочие</text>
<rect x="188.5" y="858" width="13" height="13" fill="#ffffff" />
<line x1="188.5" y1="859" x2="200.5" y2="859" stroke="#808080" stroke-width="2" />
<line x1="189.5" y1="858" x2="189.5" y2="870" stroke="#808080" stroke-width="2" />
<line x1="188.5" y1="870.5" x2="201.5" y2="870.5" stroke="#f4f4f4" stroke-width="1" />
<line x1="201.0" y1="858" x2="201.0" y2="871" stroke="#f4f4f4" stroke-width="1" />
<path d="M191.5 864.5 l2.5 3 l5-6.5" fill="none" stroke="#000" stroke-width="2.2"/>
<text x="204.5" y="869" font-size="11" fill="#000" font-family="Liberation Sans" textLength="283.5" lengthAdjust="spacingAndGlyphs" >Отображать должность в АОСР (в подписантах, внизу)</text>
<rect x="508" y="858" width="13" height="13" fill="#ffffff" />
<line x1="508" y1="859" x2="520" y2="859" stroke="#808080" stroke-width="2" />
<line x1="509" y1="858" x2="509" y2="870" stroke="#808080" stroke-width="2" />
<line x1="508" y1="870.5" x2="521" y2="870.5" stroke="#f4f4f4" stroke-width="1" />
<line x1="520.5" y1="858" x2="520.5" y2="871" stroke="#f4f4f4" stroke-width="1" />
<path d="M511 864.5 l2.5 3 l5-6.5" fill="none" stroke="#000" stroke-width="2.2"/>
<text x="524" y="869" font-size="11" fill="#000" font-family="Liberation Sans" textLength="304" lengthAdjust="spacingAndGlyphs" >Отображать должность в реестрах (в подписантах, внизу)</text>
<text x="202.5" y="896" font-size="11" fill="#000" font-family="Liberation Sans" textLength="158.5" lengthAdjust="spacingAndGlyphs" >Количество экземпляров актов</text>
<rect x="379" y="878" width="71" height="22" fill="#ffffff" />
<line x1="379" y1="878.5" x2="450" y2="878.5" stroke="#808080" stroke-width="1.5" />
<line x1="379.5" y1="878" x2="379.5" y2="900" stroke="#808080" stroke-width="1.5" />
<text x="390" y="889" font-size="11" fill="#111" font-family="Liberation Sans" >4</text>
<rect x="188.5" y="914" width="13" height="13" fill="#ffffff" />
<line x1="188.5" y1="915" x2="200.5" y2="915" stroke="#808080" stroke-width="2" />
<line x1="189.5" y1="914" x2="189.5" y2="926" stroke="#808080" stroke-width="2" />
<line x1="188.5" y1="926.5" x2="201.5" y2="926.5" stroke="#f4f4f4" stroke-width="1" />
<line x1="201.0" y1="914" x2="201.0" y2="927" stroke="#f4f4f4" stroke-width="1" />
<path d="M191.5 920.5 l2.5 3 l5-6.5" fill="none" stroke="#000" stroke-width="2.2"/>
<text x="204.5" y="925" font-size="11" fill="#000" font-family="Liberation Sans" textLength="321.5" lengthAdjust="spacingAndGlyphs" >Приложения (в АОСР): v = Каждое приложение с новой строки</text>
<text x="226" y="945" font-size="11" fill="#000" font-family="Liberation Sans" textLength="361" lengthAdjust="spacingAndGlyphs" >Приложения в журнале (столбик &quot;О&quot;) необходимо разделять символом</text>
<rect x="931" y="233" width="693" height="812" fill="#b5dcd4" />
<rect x="931" y="233" width="693" height="31" fill="#0063b1" />
<line x1="931.5" y1="233" x2="931.5" y2="1045" stroke="#3c8fd8" stroke-width="1" />
<line x1="1623.5" y1="233" x2="1623.5" y2="1045" stroke="#3c8fd8" stroke-width="1" />
<line x1="931" y1="1044.5" x2="1624" y2="1044.5" stroke="#3c8fd8" stroke-width="1" />
<path d="M1602 241.5 l12 12 M1614 241.5 l-12 12" stroke="#fff" stroke-width="1.3"/>
<text x="940" y="294.5" font-size="25" fill="#111" font-family="Liberation Sans" textLength="114" lengthAdjust="spacingAndGlyphs" >Настройки</text>
<rect x="1412.5" y="271" width="95.0" height="31" fill="#f0f0f0" />
<line x1="1412.5" y1="271.5" x2="1507.5" y2="271.5" stroke="#ffffff" stroke-width="1" />
<line x1="1413.0" y1="271" x2="1413.0" y2="302" stroke="#ffffff" stroke-width="1" />
<line x1="1412.5" y1="301.5" x2="1507.5" y2="301.5" stroke="#696969" stroke-width="1" />
<line x1="1507.0" y1="271" x2="1507.0" y2="302" stroke="#696969" stroke-width="1" />
<line x1="1413.5" y1="300.5" x2="1506.5" y2="300.5" stroke="#a0a0a0" stroke-width="1" />
<line x1="1506.0" y1="272" x2="1506.0" y2="301" stroke="#a0a0a0" stroke-width="1" />
<text x="1460.0" y="291.5" font-size="13" fill="#2020ff" font-family="Liberation Sans" font-weight="bold" text-anchor="middle" textLength="18" lengthAdjust="spacingAndGlyphs" >ОК</text>
<rect x="1523.5" y="271" width="94.0" height="31" fill="#f0f0f0" />
<line x1="1523.5" y1="271.5" x2="1617.5" y2="271.5" stroke="#ffffff" stroke-width="1" />
<line x1="1524.0" y1="271" x2="1524.0" y2="302" stroke="#ffffff" stroke-width="1" />
<line x1="1523.5" y1="301.5" x2="1617.5" y2="301.5" stroke="#696969" stroke-width="1" />
<line x1="1617.0" y1="271" x2="1617.0" y2="302" stroke="#696969" stroke-width="1" />
<line x1="1524.5" y1="300.5" x2="1616.5" y2="300.5" stroke="#a0a0a0" stroke-width="1" />
<line x1="1616.0" y1="272" x2="1616.0" y2="301" stroke="#a0a0a0" stroke-width="1" />
<text x="1570.5" y="291.5" font-size="13" fill="#ff0a0a" font-family="Liberation Sans" font-weight="bold" text-anchor="middle" textLength="50" lengthAdjust="spacingAndGlyphs" >Отмена</text>
<rect x="941.5" y="310.5" width="677" height="19.5" fill="#f0f0f0" />
<line x1="942" y1="330" x2="942" y2="1041" stroke="#f8f8f8" stroke-width="1" />
<line x1="1617" y1="330" x2="1617" y2="1041" stroke="#808080" stroke-width="1" />
<text x="947" y="326" font-size="11" fill="#222" font-family="Liberation Sans" textLength="90" lengthAdjust="spacingAndGlyphs" >Содержимое акта</text>
<rect x="1045" y="312" width="47.5" height="16.5" fill="#f0f0f0" />
<rect x="1045.5" y="312.5" width="46.5" height="15.5" fill="none" stroke="#333" stroke-width="1" stroke-dasharray="1,1"/>
<line x1="1093.5" y1="312" x2="1093.5" y2="330" stroke="#707070" stroke-width="1.5" />
<text x="1049" y="323" font-size="11" fill="#111" font-family="Liberation Sans" textLength="35" lengthAdjust="spacingAndGlyphs" >Общие</text>
<rect x="951" y="344" width="13" height="13" fill="#ffffff" />
<line x1="951" y1="345" x2="963" y2="345" stroke="#808080" stroke-width="2" />
<line x1="952" y1="344" x2="952" y2="356" stroke="#808080" stroke-width="2" />
<line x1="951" y1="356.5" x2="964" y2="356.5" stroke="#f4f4f4" stroke-width="1" />
<line x1="963.5" y1="344" x2="963.5" y2="357" stroke="#f4f4f4" stroke-width="1" />
<path d="M954 350.5 l2.5 3 l5-6.5" fill="none" stroke="#000" stroke-width="2.2"/>
<text x="967" y="355" font-size="11" fill="#000" font-family="Liberation Sans" textLength="218" lengthAdjust="spacingAndGlyphs" >Экспорт в PDF не более чем на 2 страницы.</text>
<rect x="951" y="376" width="13" height="13" fill="#ffffff" />
<line x1="951" y1="377" x2="963" y2="377" stroke="#808080" stroke-width="2" />
<line x1="952" y1="376" x2="952" y2="388" stroke="#808080" stroke-width="2" />
<line x1="951" y1="388.5" x2="964" y2="388.5" stroke="#f4f4f4" stroke-width="1" />
<line x1="963.5" y1="376" x2="963.5" y2="389" stroke="#f4f4f4" stroke-width="1" />
<path d="M954 382.5 l2.5 3 l5-6.5" fill="none" stroke="#000" stroke-width="2.2"/>
<text x="967" y="387" font-size="11" fill="#000" font-family="Liberation Sans" textLength="214" lengthAdjust="spacingAndGlyphs" >Использовать календарь для выбора дат.</text>
<rect x="951" y="407" width="13" height="13" fill="#ffffff" />
<line x1="951" y1="408" x2="963" y2="408" stroke="#808080" stroke-width="2" />
<line x1="952" y1="407" x2="952" y2="419" stroke="#808080" stroke-width="2" />
<line x1="951" y1="419.5" x2="964" y2="419.5" stroke="#f4f4f4" stroke-width="1" />
<line x1="963.5" y1="407" x2="963.5" y2="420" stroke="#f4f4f4" stroke-width="1" />
<text x="967" y="418" font-size="11" fill="#000" font-family="Liberation Sans" textLength="463" lengthAdjust="spacingAndGlyphs" >Создавать акты и реестры в отдельную папку &quot;AOSR_id&quot;, не создавать акты во вкладках.</text>
<rect x="951" y="439" width="13" height="13" fill="#ffffff" />
<line x1="951" y1="440" x2="963" y2="440" stroke="#808080" stroke-width="2" />
<line x1="952" y1="439" x2="952" y2="451" stroke="#808080" stroke-width="2" />
<line x1="951" y1="451.5" x2="964" y2="451.5" stroke="#f4f4f4" stroke-width="1" />
<line x1="963.5" y1="439" x2="963.5" y2="452" stroke="#f4f4f4" stroke-width="1" />
<text x="967" y="450" font-size="11" fill="#000" font-family="Liberation Sans" textLength="627" lengthAdjust="spacingAndGlyphs" >v = Сохранить реестры Р.МТР и Р.Док при обновлении АОСР, пусто = пересоздавать реестры Р.МТР и Р.Док вместе с АОСР</text>
<rect x="951" y="470" width="13" height="13" fill="#ffffff" />
<line x1="951" y1="471" x2="963" y2="471" stroke="#808080" stroke-width="2" />
<line x1="952" y1="470" x2="952" y2="482" stroke="#808080" stroke-width="2" />
<line x1="951" y1="482.5" x2="964" y2="482.5" stroke="#f4f4f4" stroke-width="1" />
<line x1="963.5" y1="470" x2="963.5" y2="483" stroke="#f4f4f4" stroke-width="1" />
<path d="M954 476.5 l2.5 3 l5-6.5" fill="none" stroke="#000" stroke-width="2.2"/>
<text x="967" y="481" font-size="11" fill="#000" font-family="Liberation Sans" textLength="229.6" lengthAdjust="spacingAndGlyphs" >Наименование вкладок актов по номеру акта</text>
<rect x="951" y="502" width="13" height="13" fill="#ffffff" />
<line x1="951" y1="503" x2="963" y2="503" stroke="#808080" stroke-width="2" />
<line x1="952" y1="502" x2="952" y2="514" stroke="#808080" stroke-width="2" />
<line x1="951" y1="514.5" x2="964" y2="514.5" stroke="#f4f4f4" stroke-width="1" />
<line x1="963.5" y1="502" x2="963.5" y2="515" stroke="#f4f4f4" stroke-width="1" />
<text x="967" y="513" font-size="11" fill="#000" font-family="Liberation Sans" textLength="267" lengthAdjust="spacingAndGlyphs" >Использовать форму АОСР2 (Малострочную версию)</text>
<rect x="951" y="533" width="13" height="13" fill="#ffffff" />
<line x1="951" y1="534" x2="963" y2="534" stroke="#808080" stroke-width="2" />
<line x1="952" y1="533" x2="952" y2="545" stroke="#808080" stroke-width="2" />
<line x1="951" y1="545.5" x2="964" y2="545.5" stroke="#f4f4f4" stroke-width="1" />
<line x1="963.5" y1="533" x2="963.5" y2="546" stroke="#f4f4f4" stroke-width="1" />
<text x="967" y="544" font-size="11" fill="#000" font-family="Liberation Sans" textLength="367" lengthAdjust="spacingAndGlyphs" >Использовать Дату окончания работ в качестве даты составления акта</text>
<text x="950" y="570" font-size="11" fill="#111" font-family="Liberation Sans" font-weight="bold" textLength="25" lengthAdjust="spacingAndGlyphs" >ОЖР</text>
<rect x="951" y="588" width="13" height="13" fill="#ffffff" />
<line x1="951" y1="589" x2="963" y2="589" stroke="#808080" stroke-width="2" />
<line x1="952" y1="588" x2="952" y2="600" stroke="#808080" stroke-width="2" />
<line x1="951" y1="600.5" x2="964" y2="600.5" stroke="#f4f4f4" stroke-width="1" />
<line x1="963.5" y1="588" x2="963.5" y2="601" stroke="#f4f4f4" stroke-width="1" />
<path d="M954 594.5 l2.5 3 l5-6.5" fill="none" stroke="#000" stroke-width="2.2"/>
<text x="967" y="599" font-size="11" fill="#000" font-family="Liberation Sans" textLength="508" lengthAdjust="spacingAndGlyphs" >Указать в ОЖР/раздел 3 одинаковую запись работ из АОСР, если работы велись более одного дня.</text>
<rect x="975" y="612" width="13" height="13" fill="#ffffff" />
<line x1="975" y1="613" x2="987" y2="613" stroke="#808080" stroke-width="2" />
<line x1="976" y1="612" x2="976" y2="624" stroke="#808080" stroke-width="2" />
<line x1="975" y1="624.5" x2="988" y2="624.5" stroke="#f4f4f4" stroke-width="1" />
<line x1="987.5" y1="612" x2="987.5" y2="625" stroke="#f4f4f4" stroke-width="1" />
<path d="M978 618.5 l2.5 3 l5-6.5" fill="none" stroke="#000" stroke-width="2.2"/>
<text x="991" y="623" font-size="11" fill="#000" font-family="Liberation Sans" textLength="311.5" lengthAdjust="spacingAndGlyphs" >Указывать и распределять объём работ равномерно по дням.</text>
<rect x="951" y="644" width="13" height="13" fill="#ffffff" />
<line x1="951" y1="645" x2="963" y2="645" stroke="#808080" stroke-width="2" />
<line x1="952" y1="644" x2="952" y2="656" stroke="#808080" stroke-width="2" />
<line x1="951" y1="656.5" x2="964" y2="656.5" stroke="#f4f4f4" stroke-width="1" />
<line x1="963.5" y1="644" x2="963.5" y2="657" stroke="#f4f4f4" stroke-width="1" />
<text x="967" y="655" font-size="11" fill="#000" font-family="Liberation Sans" textLength="500.5" lengthAdjust="spacingAndGlyphs" >v = Подгонять высоту строк реестров (медленнее); пусто = не подгонять высоту строк (быстрее)</text>
<text x="950" y="689" font-size="11" fill="#111" font-family="Liberation Sans" font-weight="bold" textLength="60.5" lengthAdjust="spacingAndGlyphs" >Реестр ИД</text>
<rect x="951" y="707" width="13" height="13" fill="#ffffff" />
<line x1="951" y1="708" x2="963" y2="708" stroke="#808080" stroke-width="2" />
<line x1="952" y1="707" x2="952" y2="719" stroke="#808080" stroke-width="2" />
<line x1="951" y1="719.5" x2="964" y2="719.5" stroke="#f4f4f4" stroke-width="1" />
<line x1="963.5" y1="707" x2="963.5" y2="720" stroke="#f4f4f4" stroke-width="1" />
<path d="M954 713.5 l2.5 3 l5-6.5" fill="none" stroke="#000" stroke-width="2.2"/>
<text x="967" y="718" font-size="11" fill="#000" font-family="Liberation Sans" textLength="371" lengthAdjust="spacingAndGlyphs" >Приложения к акту были составлены той же организацией, что и сам акт</text>
<text x="949" y="760" font-size="11" fill="#1010e0" font-family="Liberation Sans" textLength="471" lengthAdjust="spacingAndGlyphs" >Название акта входного контроля (Рекомендация - указать перед использованием журнала)</text>
<rect x="950" y="764.5" width="647" height="23" fill="#ffffff" />
<line x1="950" y1="765" x2="1597" y2="765" stroke="#808080" stroke-width="1.5" />
<line x1="950.5" y1="765" x2="950.5" y2="787.5" stroke="#808080" stroke-width="1.5" />
<text x="961" y="780" font-size="11" fill="#111" font-family="Liberation Sans" textLength="119" lengthAdjust="spacingAndGlyphs" >Акт входного контроля</text>
<path d="M877 213.5 L902 194 L902 206 L1250 212 L1863 223.5 L1250 221 L902 222 L902 233 Z" fill="#d64b40" />
<ellipse cx="233" cy="227" rx="62" ry="17" fill="none" stroke="#d64b40" stroke-width="6"/>
<ellipse cx="1071" cy="319" rx="54" ry="17.5" fill="none" stroke="#d64b40" stroke-width="6"/>
<circle cx="1871.5" cy="262" r="55.5" fill="none" stroke="#d64b40" stroke-width="6"/>
<rect x="1615" y="124.5" width="253" height="80" fill="#000000" fill-opacity="0.63"/>
<text x="1631" y="180" font-size="44" fill="#ffffff" font-family="Liberation Sans" textLength="221" lengthAdjust="spacingAndGlyphs" >Настройки</text>
<defs><filter id="ds" x="-10%" y="-10%" width="130%" height="140%"><feGaussianBlur in="SourceAlpha" stdDeviation="2.5"/><feOffset dx="3" dy="3"/><feComponentTransfer><feFuncA type="linear" slope="0.55"/></feComponentTransfer><feMerge><feMergeNode/><feMergeNode in="SourceGraphic"/></feMerge></filter></defs>
<text x="1627" y="977" font-size="52.5" fill="#c4161c" font-family="Liberation Serif" textLength="262" lengthAdjust="spacingAndGlyphs" filter="url(#ds)" stroke="#c4161c" stroke-width="1.6">ProVersion</text>
</svg>
</body></html>
